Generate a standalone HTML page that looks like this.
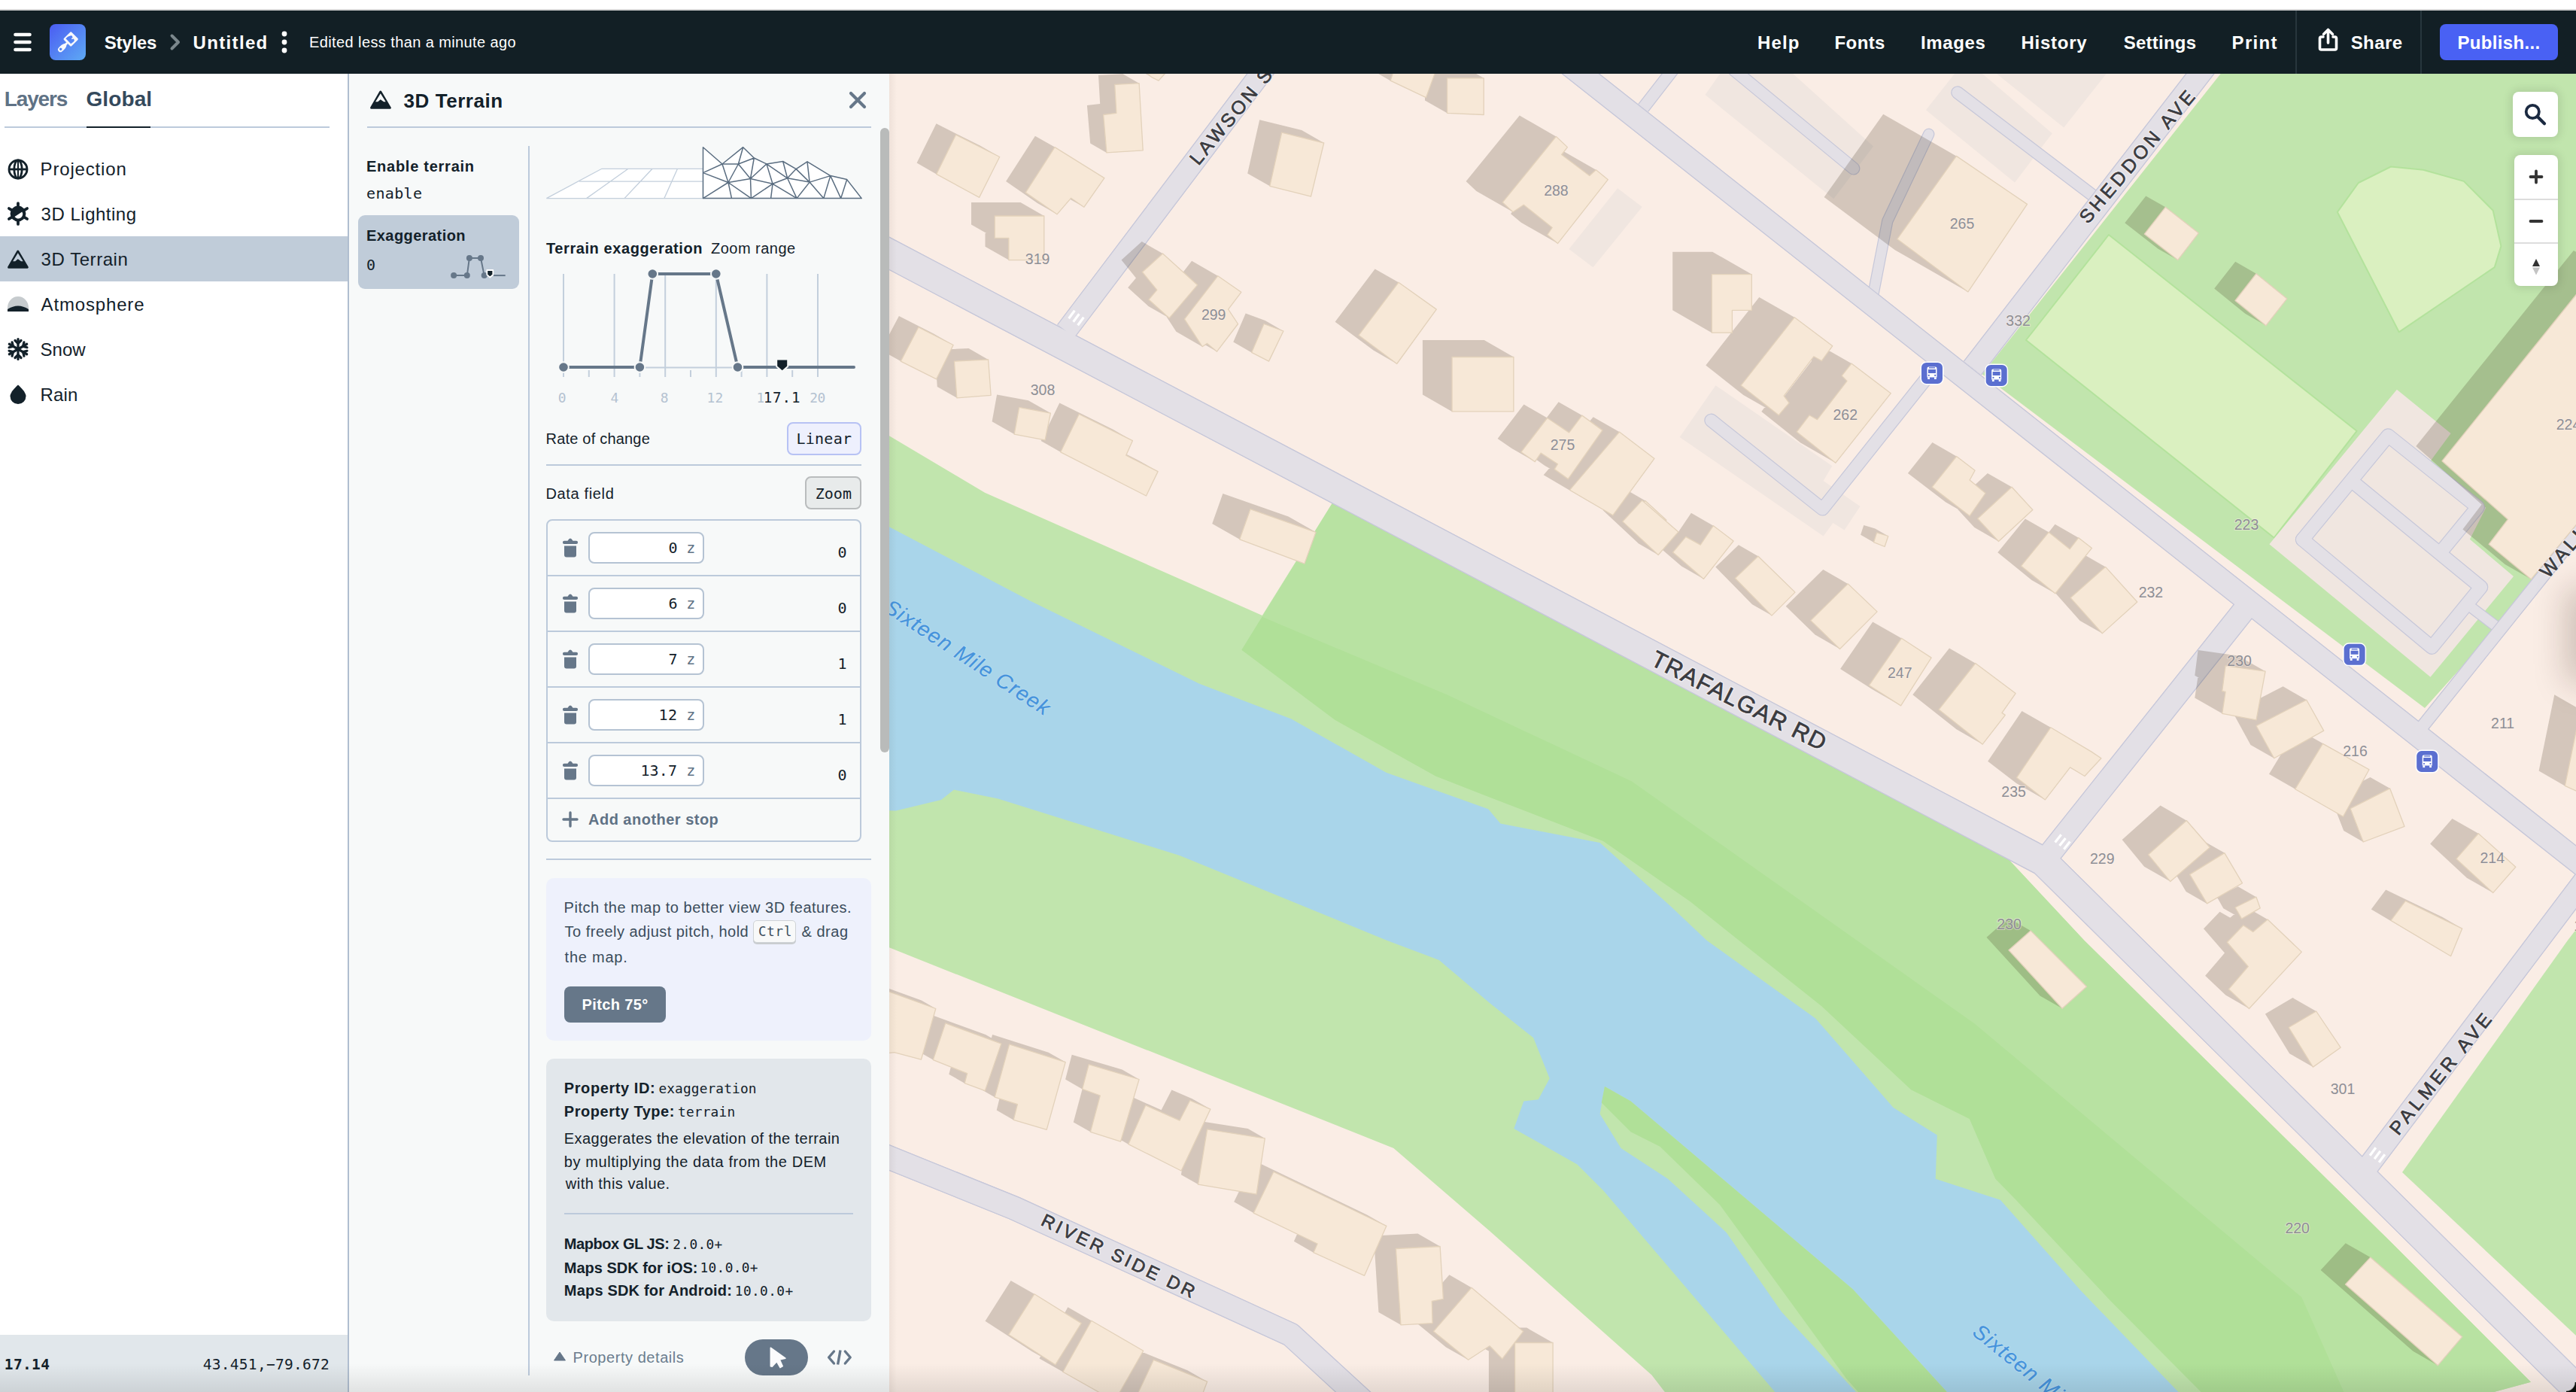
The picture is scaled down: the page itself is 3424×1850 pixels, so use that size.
<!DOCTYPE html>
<html lang="en">
<head>
<meta charset="utf-8">
<title>Mapbox Studio</title>
<style>
html,body{margin:0;padding:0}
body{width:3424px;height:1850px;overflow:hidden;background:#fff;position:relative;font-family:"Liberation Sans",sans-serif;color:#13212a}
.abs,.t,.tb,.m,svg{position:absolute}
.t,.tb,.m{white-space:pre;line-height:1}
.tb{font-weight:bold}
.m{font-family:"DejaVu Sans Mono","Liberation Mono",monospace}
#strip{left:0;top:0;width:3424px;height:12px;background:#fff;border-bottom:2px solid #d6d6d6}
#topbar{left:0;top:14px;width:3424px;height:84px;background:#121f25}
#left{left:0;top:98px;width:462px;height:1752px;background:#fff}
#lborder{left:462px;top:98px;width:2px;height:1752px;background:#b0bed0}
#mid{left:464px;top:98px;width:718px;height:1752px;background:#f7f9f9}
#map{left:1182px;top:98px;width:2242px;height:1752px;background:#faede5;overflow:hidden}
.ln{background:#bccadb}
.inp{left:782px;width:150px;height:38px;border:2px solid #b5c3d3;border-radius:8px;background:#fff}
.ctl{background:#fff;border-radius:8px;box-shadow:0 0 12px 3px rgba(0,0,0,.10)}
</style>
</head>
<body>
<div id="strip" class="abs"></div>
<div id="topbar" class="abs"></div>
<div id="left" class="abs"></div>
<div id="lborder" class="abs"></div>
<div id="mid" class="abs"></div>
<div id="map" class="abs">
<svg style="left:0;top:0" width="2242" height="1752" viewBox="1182 98 2242 1752"><polygon points="1170.0,572.0 1309.0,654.7 1677.8,818.0 1771.3,668.0 1790.0,657.0 2716.0,1145.0 2665.0,1137.0 2770.5,1250.0 3177.2,1650.0 3364.0,1836.8 3315.0,1850.0 2212.8,1850.0 2195.5,1827.6 1980.0,1636.0 1852.4,1525.9 1170.0,1254.6" fill="#c1e5ad"/>
<polygon points="3193.0,1558.0 3412.8,1250.0 3440.0,1215.0 3440.0,1790.0" fill="#c1e5ad"/>
<polygon points="2958.0,90.0 3440.0,90.0 3440.0,700.0 3223.0,941.0 2837.4,650.0 2634.8,497.3" fill="#c1e5ad"/>
<polygon points="1771.3,668.0 1650.4,863.8 1774.8,956.9 1908.4,1031.5 1980.0,1059.5 2130.9,1117.7 2246.5,1198.0 2421.1,1337.0 2540.3,1448.3 2617.9,1487.0 2652.4,1566.8 2680.0,1595.0 2805.0,1728.4 2925.7,1850.0 3315.0,1850.0 3364.0,1836.8 3177.2,1650.0 2770.5,1250.0 2665.0,1137.0 2716.0,1145.0 1790.0,657.0" fill="#b8e2a2"/>
<polygon points="1677.6,819.8 1923.3,923.3 2169.0,1038.4 2624.0,1360.0 3059.3,1724.1 3115.4,1850.0 2925.7,1850.0 2805.0,1728.4 2680.0,1595.0 2652.4,1566.8 2617.9,1487.0 2540.3,1448.3 2421.1,1337.0 2246.5,1198.0 2130.9,1117.7 1980.0,1059.5 1908.4,1031.5 1774.8,956.9 1650.4,863.8" fill="#b0e098"/>
<polygon points="2802.9,312.0 3132.6,572.8 3022.7,714.7 2693.0,452.0" fill="#daf0c0" stroke="#b3e29c" stroke-width="2" stroke-linejoin="round"/>
<polygon points="3106.8,281.8 3134.8,243.0 3177.9,221.5 3221.0,225.8 3274.9,240.9 3313.7,279.7 3324.4,327.1 3315.8,355.1 3188.7,441.3" fill="#daf0c0" stroke="#b3e29c" stroke-width="2" stroke-linejoin="round"/>
<polygon points="1170.0,694.0 1369.7,798.7 1593.8,908.6 1716.4,955.6 1842.5,1026.7 1978.2,1075.2 1994.4,1094.6 2126.6,1120.0 2220.7,1204.5 2268.8,1250.0 2413.2,1353.4 2516.6,1472.0 2574.8,1508.6 2572.7,1566.8 2658.9,1594.8 2766.0,1715.5 2895.5,1850.0 2359.3,1850.0 2130.9,1581.9 2096.4,1547.4 2012.3,1500.0 2025.3,1463.4 2044.7,1461.2 2059.7,1433.2 2038.2,1379.3 1980.0,1333.0 1912.8,1275.9 1843.8,1250.0 1568.0,1137.0 1326.6,1061.6 1268.0,1049.6 1251.0,1063.0 1190.8,1077.6 1170.0,1076.7" fill="#a9d5ea"/>
<polygon points="2133.0,1444.0 2126.6,1480.6 2154.6,1525.9 2217.0,1566.8 2294.7,1637.9 2368.0,1743.5 2467.0,1850.0 2587.8,1850.0 2462.8,1713.4 2167.5,1463.4" fill="#c1e5ad"/>
<polygon points="2133.0,1444.0 2128.7,1465.5 2167.5,1504.3 2206.3,1523.7 2286.0,1601.3 2454.0,1832.0 2470.0,1850.0 2587.8,1850.0 2462.8,1713.4 2167.5,1463.4" fill="#b0e098"/>
<polyline points="1100.0,293.6 2716.0,1145.0 3500.0,1919.9" fill="none" stroke="#c6c7d9" stroke-width="39.4" stroke-linecap="butt" stroke-linejoin="round"/>
<polyline points="2050.0,57.8 3500.0,1203.3" fill="none" stroke="#c6c7d9" stroke-width="31.4" stroke-linecap="butt" stroke-linejoin="round"/>
<polyline points="1417.0,440.0 1700.0,65.6" fill="none" stroke="#c6c7d9" stroke-width="29.4" stroke-linecap="butt" stroke-linejoin="round"/>
<polyline points="2622.0,489.0 2955.0,58.4" fill="none" stroke="#c6c7d9" stroke-width="30.4" stroke-linecap="butt" stroke-linejoin="round"/>
<polyline points="2990.7,800.8 2722.0,1138.0" fill="none" stroke="#c6c7d9" stroke-width="31.4" stroke-linecap="butt" stroke-linejoin="round"/>
<polyline points="3140.4,1559.6 3474.0,1118.2" fill="none" stroke="#c6c7d9" stroke-width="29.4" stroke-linecap="butt" stroke-linejoin="round"/>
<polyline points="3211.7,975.6 3474.0,648.5" fill="none" stroke="#c6c7d9" stroke-width="17.9" stroke-linecap="butt" stroke-linejoin="round"/>
<polyline points="1150.0,1525.6 1348.0,1605.6 1715.5,1773.7 1830.0,1879.0" fill="none" stroke="#c6c7d9" stroke-width="32.4" stroke-linecap="butt" stroke-linejoin="round"/>
<polyline points="1100.0,293.6 2716.0,1145.0 3500.0,1919.9" fill="none" stroke="#e3e0e6" stroke-width="37" stroke-linecap="butt" stroke-linejoin="round"/>
<polyline points="2050.0,57.8 3500.0,1203.3" fill="none" stroke="#e3e0e6" stroke-width="29" stroke-linecap="butt" stroke-linejoin="round"/>
<polyline points="1417.0,440.0 1700.0,65.6" fill="none" stroke="#e3e0e6" stroke-width="27" stroke-linecap="butt" stroke-linejoin="round"/>
<polyline points="2622.0,489.0 2955.0,58.4" fill="none" stroke="#e3e0e6" stroke-width="28" stroke-linecap="butt" stroke-linejoin="round"/>
<polyline points="2990.7,800.8 2722.0,1138.0" fill="none" stroke="#e3e0e6" stroke-width="29" stroke-linecap="butt" stroke-linejoin="round"/>
<polyline points="3140.4,1559.6 3474.0,1118.2" fill="none" stroke="#e3e0e6" stroke-width="27" stroke-linecap="butt" stroke-linejoin="round"/>
<polyline points="3211.7,975.6 3474.0,648.5" fill="none" stroke="#e3e0e6" stroke-width="15.5" stroke-linecap="butt" stroke-linejoin="round"/>
<polyline points="1150.0,1525.6 1348.0,1605.6 1715.5,1773.7 1830.0,1879.0" fill="none" stroke="#e3e0e6" stroke-width="30" stroke-linecap="butt" stroke-linejoin="round"/>
<polygon points="2288.3,95.0 2379.9,95.0 2490.1,194.4 2437.3,264.3 2266.5,126.1" fill="#f0e6e0"/>
<polygon points="2600.4,95.0 2631.4,95.0 2727.7,177.3 2678.0,242.5 2560.0,146.2" fill="#f0e6e0"/>
<polygon points="2650.1,95.0 2802.2,95.0 2743.2,169.5" fill="#f0e6e0"/>
<polygon points="2150.1,250.3 2182.7,275.1 2117.5,355.2 2085.5,331.0" fill="#f0e6e0"/>
<polygon points="2280.4,512.2 2435.3,619.3 2423.6,639.1 2472.5,672.9 2451.6,704.4 2436.4,695.0 2423.6,712.5 2232.6,580.9" fill="#f0e6e0"/>
<polygon points="3185.9,517.7 3257.6,575.9 3230.5,612.7 3304.2,674.8 3282.9,716.7 3341.0,766.0 3230.5,899.8 3016.4,723.3" fill="#f0e6e0"/>
<polyline points="2184.2,143.4 2224.6,91.3" fill="none" stroke="#c6c7d9" stroke-width="17.4" stroke-linecap="butt" stroke-linejoin="round"/>
<polyline points="2305.3,93.4 2463.7,223.9" fill="none" stroke="#c6c7d9" stroke-width="17.4" stroke-linecap="round" stroke-linejoin="round"/>
<polyline points="2601.9,123.0 2783.6,261.1" fill="none" stroke="#c6c7d9" stroke-width="17.4" stroke-linecap="round" stroke-linejoin="round"/>
<polyline points="2563.7,178.2 2508.8,293.8 2490.1,390.0" fill="none" stroke="#c6c7d9" stroke-width="15.4" stroke-linecap="round" stroke-linejoin="round"/>
<polyline points="2274.5,558.8 2422.4,676.4 2563.4,499.4" fill="none" stroke="#c6c7d9" stroke-width="18.4" stroke-linecap="round" stroke-linejoin="round"/>
<polyline points="3060.6,717.1 3174.3,579.0 3293.3,674.0 3248.0,729.1" fill="none" stroke="#c6c7d9" stroke-width="19.4" stroke-linecap="round" stroke-linejoin="round"/>
<polyline points="3130.4,643.0 3297.6,780.3 3232.4,860.2 3060.6,717.1" fill="none" stroke="#c6c7d9" stroke-width="19.4" stroke-linecap="round" stroke-linejoin="round"/>
<polyline points="3285.6,807.9 3319.7,833.8" fill="none" stroke="#c6c7d9" stroke-width="15.4" stroke-linecap="butt" stroke-linejoin="round"/>
<polyline points="2184.2,143.4 2224.6,91.3" fill="none" stroke="#e3e0e6" stroke-width="15" stroke-linecap="butt" stroke-linejoin="round"/>
<polyline points="2305.3,93.4 2463.7,223.9" fill="none" stroke="#e3e0e6" stroke-width="15" stroke-linecap="round" stroke-linejoin="round"/>
<polyline points="2601.9,123.0 2783.6,261.1" fill="none" stroke="#e3e0e6" stroke-width="15" stroke-linecap="round" stroke-linejoin="round"/>
<polyline points="2563.7,178.2 2508.8,293.8 2490.1,390.0" fill="none" stroke="#e3e0e6" stroke-width="13" stroke-linecap="round" stroke-linejoin="round"/>
<polyline points="2274.5,558.8 2422.4,676.4 2563.4,499.4" fill="none" stroke="#e3e0e6" stroke-width="16" stroke-linecap="round" stroke-linejoin="round"/>
<polyline points="3060.6,717.1 3174.3,579.0 3293.3,674.0 3248.0,729.1" fill="none" stroke="#e3e0e6" stroke-width="17" stroke-linecap="round" stroke-linejoin="round"/>
<polyline points="3130.4,643.0 3297.6,780.3 3232.4,860.2 3060.6,717.1" fill="none" stroke="#e3e0e6" stroke-width="17" stroke-linecap="round" stroke-linejoin="round"/>
<polyline points="3285.6,807.9 3319.7,833.8" fill="none" stroke="#e3e0e6" stroke-width="13" stroke-linecap="butt" stroke-linejoin="round"/>
<polyline points="1100.0,293.6 2716.0,1145.0 3500.0,1919.9" fill="none" stroke="#c6c7d9" stroke-width="39.4" stroke-linecap="butt" stroke-linejoin="round"/>
<polyline points="2050.0,57.8 3500.0,1203.3" fill="none" stroke="#c6c7d9" stroke-width="31.4" stroke-linecap="butt" stroke-linejoin="round"/>
<polyline points="1417.0,440.0 1700.0,65.6" fill="none" stroke="#c6c7d9" stroke-width="29.4" stroke-linecap="butt" stroke-linejoin="round"/>
<polyline points="2622.0,489.0 2955.0,58.4" fill="none" stroke="#c6c7d9" stroke-width="30.4" stroke-linecap="butt" stroke-linejoin="round"/>
<polyline points="2990.7,800.8 2722.0,1138.0" fill="none" stroke="#c6c7d9" stroke-width="31.4" stroke-linecap="butt" stroke-linejoin="round"/>
<polyline points="3140.4,1559.6 3474.0,1118.2" fill="none" stroke="#c6c7d9" stroke-width="29.4" stroke-linecap="butt" stroke-linejoin="round"/>
<polyline points="3211.7,975.6 3474.0,648.5" fill="none" stroke="#c6c7d9" stroke-width="17.9" stroke-linecap="butt" stroke-linejoin="round"/>
<polyline points="1150.0,1525.6 1348.0,1605.6 1715.5,1773.7 1830.0,1879.0" fill="none" stroke="#c6c7d9" stroke-width="32.4" stroke-linecap="butt" stroke-linejoin="round"/>
<polyline points="1100.0,293.6 2716.0,1145.0 3500.0,1919.9" fill="none" stroke="#e3e0e6" stroke-width="37" stroke-linecap="butt" stroke-linejoin="round"/>
<polyline points="2050.0,57.8 3500.0,1203.3" fill="none" stroke="#e3e0e6" stroke-width="29" stroke-linecap="butt" stroke-linejoin="round"/>
<polyline points="1417.0,440.0 1700.0,65.6" fill="none" stroke="#e3e0e6" stroke-width="27" stroke-linecap="butt" stroke-linejoin="round"/>
<polyline points="2622.0,489.0 2955.0,58.4" fill="none" stroke="#e3e0e6" stroke-width="28" stroke-linecap="butt" stroke-linejoin="round"/>
<polyline points="2990.7,800.8 2722.0,1138.0" fill="none" stroke="#e3e0e6" stroke-width="29" stroke-linecap="butt" stroke-linejoin="round"/>
<polyline points="3140.4,1559.6 3474.0,1118.2" fill="none" stroke="#e3e0e6" stroke-width="27" stroke-linecap="butt" stroke-linejoin="round"/>
<polyline points="3211.7,975.6 3474.0,648.5" fill="none" stroke="#e3e0e6" stroke-width="15.5" stroke-linecap="butt" stroke-linejoin="round"/>
<polyline points="1150.0,1525.6 1348.0,1605.6 1715.5,1773.7 1830.0,1879.0" fill="none" stroke="#e3e0e6" stroke-width="30" stroke-linecap="butt" stroke-linejoin="round"/>
<line x1="1420.6" y1="423.2" x2="1428.4" y2="412.8" stroke="#fff" stroke-width="3.2"/>
<line x1="1426.6" y1="427.7" x2="1434.4" y2="417.3" stroke="#fff" stroke-width="3.2"/>
<line x1="1432.6" y1="432.2" x2="1440.4" y2="421.8" stroke="#fff" stroke-width="3.2"/>
<line x1="2731.6" y1="1119.4" x2="2739.7" y2="1109.2" stroke="#fff" stroke-width="3.2"/>
<line x1="2737.5" y1="1124.1" x2="2745.5" y2="1113.9" stroke="#fff" stroke-width="3.2"/>
<line x1="2743.3" y1="1128.8" x2="2751.4" y2="1118.6" stroke="#fff" stroke-width="3.2"/>
<line x1="3150.1" y1="1535.7" x2="3157.9" y2="1525.3" stroke="#fff" stroke-width="3.2"/>
<line x1="3156.1" y1="1540.2" x2="3163.9" y2="1529.8" stroke="#fff" stroke-width="3.2"/>
<line x1="3162.1" y1="1544.7" x2="3169.9" y2="1534.3" stroke="#fff" stroke-width="3.2"/>
<path d="M1507.5 87.8 L1531.2 87.8 L1522.6 97.3 L1513.9 93.0 Z M1507.5 87.8 L1531.2 87.8 L1548.5 97.8 L1524.8 97.8 Z M1548.5 97.8 L1539.9 107.2 L1522.6 97.3 L1531.2 87.8 Z M1539.9 107.2 L1531.3 102.9 L1513.9 93.0 L1522.6 97.3 Z M1513.9 93.0 L1507.5 87.8 L1524.8 97.8 L1531.3 102.9 Z M1524.8 97.8 L1548.5 97.8 L1539.9 107.2 L1531.3 102.9 Z M1460.0 100.0 L1492.4 98.3 L1497.5 187.5 L1449.2 190.5 L1444.9 140.1 L1462.2 137.9 Z M1460.0 100.0 L1492.4 98.3 L1514.1 110.7 L1481.7 112.4 Z M1514.1 110.7 L1519.2 199.9 L1497.5 187.5 L1492.4 98.3 Z M1519.2 199.9 L1470.9 202.9 L1449.2 190.5 L1497.5 187.5 Z M1449.2 190.5 L1444.9 140.1 L1466.6 152.5 L1470.9 202.9 Z M1444.9 140.1 L1462.2 137.9 L1483.9 150.3 L1466.6 152.5 Z M1462.2 137.9 L1460.0 100.0 L1481.7 112.4 L1483.9 150.3 Z M1481.7 112.4 L1514.1 110.7 L1519.2 199.9 L1470.9 202.9 L1466.6 152.5 L1483.9 150.3 Z M1244.5 164.3 L1302.7 193.6 L1275.5 247.5 L1218.6 216.5 Z M1244.5 164.3 L1302.7 193.6 L1328.7 208.5 L1270.5 179.2 Z M1328.7 208.5 L1301.6 262.4 L1275.5 247.5 L1302.7 193.6 Z M1301.6 262.4 L1244.7 231.4 L1218.6 216.5 L1275.5 247.5 Z M1218.6 216.5 L1244.5 164.3 L1270.5 179.2 L1244.7 231.4 Z M1270.5 179.2 L1328.7 208.5 L1301.6 262.4 L1244.7 231.4 Z M1375.9 180.7 L1441.9 221.6 L1414.7 260.4 L1397.5 248.4 L1379.0 269.9 L1337.1 241.0 Z M1402.0 195.6 L1467.9 236.6 L1441.9 221.6 L1375.9 180.7 Z M1467.9 236.6 L1440.8 275.3 L1414.7 260.4 L1441.9 221.6 Z M1414.7 260.4 L1397.5 248.4 L1423.5 263.3 L1440.8 275.3 Z M1423.5 263.3 L1405.0 284.8 L1379.0 269.9 L1397.5 248.4 Z M1379.0 269.9 L1337.1 241.0 L1363.2 255.9 L1405.0 284.8 Z M1337.1 241.0 L1375.9 180.7 L1402.0 195.6 L1363.2 255.9 Z M1402.0 195.6 L1467.9 236.6 L1440.8 275.3 L1423.5 263.3 L1405.0 284.8 L1363.2 255.9 Z M1291.0 269.1 L1356.5 269.1 L1356.5 327.7 L1309.5 327.7 L1309.5 298.4 L1291.0 298.4 Z M1291.0 269.1 L1356.5 269.1 L1387.8 287.0 L1322.2 287.0 Z M1387.8 287.0 L1387.8 345.6 L1356.5 327.7 L1356.5 269.1 Z M1387.8 345.6 L1340.8 345.6 L1309.5 327.7 L1356.5 327.7 Z M1309.5 327.7 L1309.5 298.4 L1340.8 316.3 L1340.8 345.6 Z M1340.8 316.3 L1322.2 316.3 L1291.0 298.4 L1309.5 298.4 Z M1291.0 298.4 L1291.0 269.1 L1322.2 287.0 L1322.2 316.3 Z M1322.2 287.0 L1387.8 287.0 L1387.8 345.6 L1340.8 345.6 L1340.8 316.3 L1322.2 316.3 Z M1674.2 159.3 L1730.2 173.1 L1713.0 244.2 L1658.2 230.4 Z M1674.2 159.3 L1730.2 173.1 L1759.7 190.0 L1703.7 176.2 Z M1759.7 190.0 L1742.5 261.1 L1713.0 244.2 L1730.2 173.1 Z M1742.5 261.1 L1687.8 247.3 L1658.2 230.4 L1713.0 244.2 Z M1658.2 230.4 L1674.2 159.3 L1703.7 176.2 L1687.8 247.3 Z M1703.7 176.2 L1759.7 190.0 L1742.5 261.1 L1687.8 247.3 Z M1517.7 321.1 L1563.9 362.9 L1526.4 406.9 L1499.2 382.3 L1510.0 369.4 L1490.6 345.6 Z M1545.5 337.0 L1591.6 378.8 L1563.9 362.9 L1517.7 321.1 Z M1591.6 378.8 L1554.1 422.8 L1526.4 406.9 L1563.9 362.9 Z M1526.4 406.9 L1499.2 382.3 L1527.0 398.2 L1554.1 422.8 Z M1499.2 382.3 L1510.0 369.4 L1537.8 385.3 L1527.0 398.2 Z M1510.0 369.4 L1490.6 345.6 L1518.4 361.6 L1537.8 385.3 Z M1490.6 345.6 L1517.7 321.1 L1545.5 337.0 L1518.4 361.6 Z M1545.5 337.0 L1591.6 378.8 L1554.1 422.8 L1527.0 398.2 L1537.8 385.3 L1518.4 361.6 Z M1584.1 346.8 L1615.1 368.4 L1597.9 391.2 L1610.8 410.6 L1582.8 447.3 L1569.8 436.5 L1563.4 440.8 L1539.7 404.2 Z M1618.8 366.7 L1649.8 388.3 L1615.1 368.4 L1584.1 346.8 Z M1649.8 388.3 L1632.6 411.1 L1597.9 391.2 L1615.1 368.4 Z M1632.6 411.1 L1645.5 430.5 L1610.8 410.6 L1597.9 391.2 Z M1645.5 430.5 L1617.5 467.2 L1582.8 447.3 L1610.8 410.6 Z M1582.8 447.3 L1569.8 436.5 L1604.6 456.4 L1617.5 467.2 Z M1604.6 456.4 L1598.1 460.7 L1563.4 440.8 L1569.8 436.5 Z M1563.4 440.8 L1539.7 404.2 L1574.4 424.1 L1598.1 460.7 Z M1539.7 404.2 L1584.1 346.8 L1618.8 366.7 L1574.4 424.1 Z M1618.8 366.7 L1649.8 388.3 L1632.6 411.1 L1645.5 430.5 L1617.5 467.2 L1604.6 456.4 L1598.1 460.7 L1574.4 424.1 Z M1655.7 416.6 L1681.6 426.1 L1662.2 466.2 L1639.3 454.5 Z M1655.7 416.6 L1681.6 426.1 L1705.9 440.0 L1680.0 430.5 Z M1705.9 440.0 L1686.5 480.1 L1662.2 466.2 L1681.6 426.1 Z M1686.5 480.1 L1663.6 468.4 L1639.3 454.5 L1662.2 466.2 Z M1639.3 454.5 L1655.7 416.6 L1680.0 430.5 L1663.6 468.4 Z M1680.0 430.5 L1705.9 440.0 L1686.5 480.1 L1663.6 468.4 Z M1827.6 357.5 L1878.1 393.2 L1825.5 465.6 L1774.6 427.7 Z M1858.9 375.3 L1909.3 411.1 L1878.1 393.2 L1827.6 357.5 Z M1909.3 411.1 L1856.7 483.5 L1825.5 465.6 L1878.1 393.2 Z M1825.5 465.6 L1774.6 427.7 L1805.9 445.6 L1856.7 483.5 Z M1774.6 427.7 L1827.6 357.5 L1858.9 375.3 L1805.9 445.6 Z M1858.9 375.3 L1909.3 411.1 L1856.7 483.5 L1805.9 445.6 Z M1890.9 452.1 L1940.9 452.1 L1972.8 452.1 L1972.8 524.5 L1890.9 524.5 Z M1890.9 452.1 L1940.9 452.1 L1980.0 474.5 L1930.0 474.5 Z M1940.9 452.1 L1972.8 452.1 L2011.9 474.5 L1980.0 474.5 Z M2011.9 474.5 L2011.9 546.9 L1972.8 524.5 L1972.8 452.1 Z M2011.9 546.9 L1930.0 546.9 L1890.9 524.5 L1972.8 524.5 Z M1890.9 524.5 L1890.9 452.1 L1930.0 474.5 L1930.0 546.9 Z M1930.0 474.5 L1980.0 474.5 L2011.9 474.5 L2011.9 546.9 L1930.0 546.9 Z M1826.4 79.4 L1882.4 79.4 L1869.5 114.7 L1822.1 92.3 Z M1826.4 79.4 L1882.4 79.4 L1908.4 94.3 L1852.4 94.3 Z M1908.4 94.3 L1895.5 129.7 L1869.5 114.7 L1882.4 79.4 Z M1895.5 129.7 L1848.1 107.2 L1822.1 92.3 L1869.5 114.7 Z M1822.1 92.3 L1826.4 79.4 L1852.4 94.3 L1848.1 107.2 Z M1852.4 94.3 L1908.4 94.3 L1895.5 129.7 L1848.1 107.2 Z M1894.0 86.9 L1942.7 86.9 L1942.7 135.6 L1894.0 133.4 Z M1894.0 86.9 L1942.7 86.9 L1972.2 103.8 L1923.5 103.8 Z M1972.2 103.8 L1972.2 152.5 L1942.7 135.6 L1942.7 86.9 Z M1972.2 152.5 L1923.5 150.3 L1894.0 133.4 L1942.7 135.6 Z M1894.0 133.4 L1894.0 86.9 L1923.5 103.8 L1923.5 150.3 Z M1923.5 103.8 L1972.2 103.8 L1972.2 152.5 L1923.5 150.3 Z M1194.9 419.9 L1241.0 443.6 L1218.6 488.9 L1171.2 465.2 Z M1194.9 419.9 L1241.0 443.6 L1267.1 458.5 L1220.9 434.8 Z M1267.1 458.5 L1244.7 503.8 L1218.6 488.9 L1241.0 443.6 Z M1244.7 503.8 L1197.2 480.1 L1171.2 465.2 L1218.6 488.9 Z M1171.2 465.2 L1194.9 419.9 L1220.9 434.8 L1197.2 480.1 Z M1220.9 434.8 L1267.1 458.5 L1244.7 503.8 L1197.2 480.1 Z M1242.3 465.2 L1287.6 463.0 L1291.0 510.4 L1245.8 513.9 Z M1242.3 465.2 L1287.6 463.0 L1313.6 477.9 L1268.4 480.1 Z M1313.6 477.9 L1317.1 525.3 L1291.0 510.4 L1287.6 463.0 Z M1317.1 525.3 L1271.8 528.8 L1245.8 513.9 L1291.0 510.4 Z M1245.8 513.9 L1242.3 465.2 L1268.4 480.1 L1271.8 528.8 Z M1268.4 480.1 L1313.6 477.9 L1317.1 525.3 L1271.8 528.8 Z M1325.1 524.4 L1366.9 532.2 L1359.5 567.9 L1318.6 560.2 Z M1325.1 524.4 L1366.9 532.2 L1396.4 549.1 L1354.6 541.3 Z M1396.4 549.1 L1389.1 584.8 L1359.5 567.9 L1366.9 532.2 Z M1389.1 584.8 L1348.1 577.1 L1318.6 560.2 L1359.5 567.9 Z M1318.6 560.2 L1325.1 524.4 L1354.6 541.3 L1348.1 577.1 Z M1354.6 541.3 L1396.4 549.1 L1389.1 584.8 L1348.1 577.1 Z M1408.3 535.4 L1479.4 570.8 L1470.8 590.2 L1513.0 611.7 L1497.5 644.1 L1383.7 585.9 Z M1408.3 535.4 L1479.4 570.8 L1505.4 585.7 L1434.3 550.3 Z M1505.4 585.7 L1496.8 605.1 L1470.8 590.2 L1479.4 570.8 Z M1470.8 590.2 L1513.0 611.7 L1539.1 626.6 L1496.8 605.1 Z M1539.1 626.6 L1523.5 659.0 L1497.5 644.1 L1513.0 611.7 Z M1523.5 659.0 L1409.7 600.8 L1383.7 585.9 L1497.5 644.1 Z M1383.7 585.9 L1408.3 535.4 L1434.3 550.3 L1409.7 600.8 Z M1434.3 550.3 L1505.4 585.7 L1496.8 605.1 L1539.1 626.6 L1523.5 659.0 L1409.7 600.8 Z M1625.4 655.9 L1712.5 686.5 L1697.4 728.3 L1611.2 695.9 Z M1625.4 655.9 L1712.5 686.5 L1749.0 707.3 L1661.9 676.7 Z M1749.0 707.3 L1733.9 749.1 L1697.4 728.3 L1712.5 686.5 Z M1733.9 749.1 L1647.7 716.8 L1611.2 695.9 L1697.4 728.3 Z M1611.2 695.9 L1625.4 655.9 L1661.9 676.7 L1647.7 716.8 Z M1661.9 676.7 L1749.0 707.3 L1733.9 749.1 L1647.7 716.8 Z M2019.8 153.5 L2034.8 167.8 L2027.1 177.7 L2064.2 205.7 L2072.8 197.9 L2088.7 210.9 L2021.9 295.8 L2008.1 284.2 L2014.6 274.7 L1976.7 244.5 L1962.4 254.0 L1948.6 241.0 Z M2068.4 181.4 L2083.4 195.6 L2034.8 167.8 L2019.8 153.5 Z M2083.4 195.6 L2075.7 205.5 L2027.1 177.7 L2034.8 167.8 Z M2075.7 205.5 L2112.8 233.5 L2064.2 205.7 L2027.1 177.7 Z M2064.2 205.7 L2072.8 197.9 L2121.4 225.8 L2112.8 233.5 Z M2121.4 225.8 L2137.3 238.7 L2088.7 210.9 L2072.8 197.9 Z M2137.3 238.7 L2070.5 323.6 L2021.9 295.8 L2088.7 210.9 Z M2021.9 295.8 L2008.1 284.2 L2056.7 312.0 L2070.5 323.6 Z M2008.1 284.2 L2014.6 274.7 L2063.2 302.5 L2056.7 312.0 Z M2014.6 274.7 L1976.7 244.5 L2025.3 272.3 L2063.2 302.5 Z M2025.3 272.3 L2011.0 281.8 L1962.4 254.0 L1976.7 244.5 Z M1962.4 254.0 L1948.6 241.0 L1997.2 268.9 L2011.0 281.8 Z M1948.6 241.0 L2019.8 153.5 L2068.4 181.4 L1997.2 268.9 Z M2068.4 181.4 L2083.4 195.6 L2075.7 205.5 L2112.8 233.5 L2121.4 225.8 L2137.3 238.7 L2070.5 323.6 L2056.7 312.0 L2063.2 302.5 L2025.3 272.3 L2011.0 281.8 L1997.2 268.9 Z M2223.2 334.7 L2276.2 334.7 L2276.2 382.6 L2250.3 382.6 L2250.3 412.3 L2223.2 412.3 Z M2223.2 334.7 L2276.2 334.7 L2328.3 364.6 L2275.3 364.6 Z M2328.3 364.6 L2328.3 412.4 L2276.2 382.6 L2276.2 334.7 Z M2328.3 412.4 L2302.4 412.4 L2250.3 382.6 L2276.2 382.6 Z M2302.4 412.4 L2302.4 442.2 L2250.3 412.3 L2250.3 382.6 Z M2302.4 442.2 L2275.3 442.2 L2223.2 412.3 L2250.3 412.3 Z M2223.2 412.3 L2223.2 334.7 L2275.3 364.6 L2275.3 442.2 Z M2275.3 364.6 L2328.3 364.6 L2328.3 412.4 L2302.4 412.4 L2302.4 442.2 L2275.3 442.2 Z M2338.3 395.0 L2388.8 433.0 L2374.4 452.8 L2363.9 446.9 L2324.3 499.3 L2331.3 508.7 L2317.3 525.0 L2267.3 485.4 Z M2385.2 421.8 L2435.7 459.8 L2388.8 433.0 L2338.3 395.0 Z M2435.7 459.8 L2421.3 479.6 L2374.4 452.8 L2388.8 433.0 Z M2421.3 479.6 L2410.8 473.8 L2363.9 446.9 L2374.4 452.8 Z M2410.8 473.8 L2371.2 526.2 L2324.3 499.3 L2363.9 446.9 Z M2371.2 526.2 L2378.2 535.5 L2331.3 508.7 L2324.3 499.3 Z M2378.2 535.5 L2364.2 551.8 L2317.3 525.0 L2331.3 508.7 Z M2317.3 525.0 L2267.3 485.4 L2314.1 512.2 L2364.2 551.8 Z M2267.3 485.4 L2338.3 395.0 L2385.2 421.8 L2314.1 512.2 Z M2385.2 421.8 L2435.7 459.8 L2421.3 479.6 L2410.8 473.8 L2371.2 526.2 L2378.2 535.5 L2364.2 551.8 L2314.1 512.2 Z M2414.0 456.3 L2466.4 495.8 L2393.0 588.3 L2341.3 547.1 L2358.1 525.0 L2368.6 530.8 L2408.2 479.5 L2401.2 472.6 Z M2460.9 483.1 L2513.3 522.7 L2466.4 495.8 L2414.0 456.3 Z M2513.3 522.7 L2439.9 615.2 L2393.0 588.3 L2466.4 495.8 Z M2393.0 588.3 L2341.3 547.1 L2388.2 573.9 L2439.9 615.2 Z M2341.3 547.1 L2358.1 525.0 L2405.0 551.8 L2388.2 573.9 Z M2358.1 525.0 L2368.6 530.8 L2415.5 557.6 L2405.0 551.8 Z M2368.6 530.8 L2408.2 479.5 L2455.0 506.4 L2415.5 557.6 Z M2408.2 479.5 L2401.2 472.6 L2448.1 499.4 L2455.0 506.4 Z M2401.2 472.6 L2414.0 456.3 L2460.9 483.1 L2448.1 499.4 Z M2460.9 483.1 L2513.3 522.7 L2439.9 615.2 L2388.2 573.9 L2405.0 551.8 L2415.5 557.6 L2455.0 506.4 L2448.1 499.4 Z M2503.2 151.8 L2597.3 215.7 L2518.7 332.2 L2424.6 262.0 Z M2600.4 207.4 L2694.5 271.4 L2597.3 215.7 L2503.2 151.8 Z M2694.5 271.4 L2615.9 387.9 L2518.7 332.2 L2597.3 215.7 Z M2518.7 332.2 L2424.6 262.0 L2521.8 317.7 L2615.9 387.9 Z M2424.6 262.0 L2503.2 151.8 L2600.4 207.4 L2521.8 317.7 Z M2600.4 207.4 L2694.5 271.4 L2615.9 387.9 L2521.8 317.7 Z M2025.5 537.6 L2054.4 557.0 L2071.6 534.2 L2098.8 554.0 L2053.1 618.7 L2035.0 605.7 L2039.3 598.8 L2016.9 584.2 L2009.1 595.8 L1990.6 582.9 Z M2056.7 555.5 L2085.6 574.9 L2054.4 557.0 L2025.5 537.6 Z M2054.4 557.0 L2071.6 534.2 L2102.8 552.1 L2085.6 574.9 Z M2102.8 552.1 L2130.0 571.9 L2098.8 554.0 L2071.6 534.2 Z M2130.0 571.9 L2084.3 636.6 L2053.1 618.7 L2098.8 554.0 Z M2053.1 618.7 L2035.0 605.7 L2066.2 623.6 L2084.3 636.6 Z M2035.0 605.7 L2039.3 598.8 L2070.5 616.7 L2066.2 623.6 Z M2039.3 598.8 L2016.9 584.2 L2048.1 602.1 L2070.5 616.7 Z M2048.1 602.1 L2040.3 613.7 L2009.1 595.8 L2016.9 584.2 Z M2009.1 595.8 L1990.6 582.9 L2021.8 600.8 L2040.3 613.7 Z M1990.6 582.9 L2025.5 537.6 L2056.7 555.5 L2021.8 600.8 Z M2056.7 555.5 L2085.6 574.9 L2102.8 552.1 L2130.0 571.9 L2084.3 636.6 L2066.2 623.6 L2070.5 616.7 L2048.1 602.1 L2040.3 613.7 L2021.8 600.8 Z M2117.7 554.2 L2164.2 589.5 L2109.1 664.9 L2051.7 631.3 Z M2152.4 574.1 L2199.0 609.4 L2164.2 589.5 L2117.7 554.2 Z M2199.0 609.4 L2143.8 684.8 L2109.1 664.9 L2164.2 589.5 Z M2109.1 664.9 L2051.7 631.3 L2086.5 651.2 L2143.8 684.8 Z M2051.7 631.3 L2117.7 554.2 L2152.4 574.1 L2086.5 651.2 Z M2152.4 574.1 L2199.0 609.4 L2143.8 684.8 L2086.5 651.2 Z M2160.9 650.5 L2188.9 676.4 L2169.5 700.1 L2139.3 676.4 Z M2186.9 665.4 L2214.9 691.3 L2188.9 676.4 L2160.9 650.5 Z M2214.9 691.3 L2195.5 715.0 L2169.5 700.1 L2188.9 676.4 Z M2169.5 700.1 L2139.3 676.4 L2165.3 691.3 L2195.5 715.0 Z M2139.3 676.4 L2160.9 650.5 L2186.9 665.4 L2165.3 691.3 Z M2186.9 665.4 L2214.9 691.3 L2195.5 715.0 L2165.3 691.3 Z M2568.5 588.1 L2593.0 606.8 L2586.0 619.6 L2606.9 637.1 L2586.0 667.3 L2535.9 628.9 Z M2600.6 606.5 L2625.1 625.2 L2593.0 606.8 L2568.5 588.1 Z M2625.1 625.2 L2618.1 638.0 L2586.0 619.6 L2593.0 606.8 Z M2618.1 638.0 L2639.1 655.5 L2606.9 637.1 L2586.0 619.6 Z M2639.1 655.5 L2618.1 685.7 L2586.0 667.3 L2606.9 637.1 Z M2586.0 667.3 L2535.9 628.9 L2568.0 647.3 L2618.1 685.7 Z M2535.9 628.9 L2568.5 588.1 L2600.6 606.5 L2568.0 647.3 Z M2600.6 606.5 L2625.1 625.2 L2618.1 638.0 L2639.1 655.5 L2618.1 685.7 L2568.0 647.3 Z M2641.9 628.9 L2669.8 659.2 L2624.4 701.1 L2596.5 670.8 Z M2674.0 647.3 L2701.9 677.6 L2669.8 659.2 L2641.9 628.9 Z M2701.9 677.6 L2656.5 719.5 L2624.4 701.1 L2669.8 659.2 Z M2624.4 701.1 L2596.5 670.8 L2628.6 689.2 L2656.5 719.5 Z M2596.5 670.8 L2641.9 628.9 L2674.0 647.3 L2628.6 689.2 Z M2674.0 647.3 L2701.9 677.6 L2656.5 719.5 L2628.6 689.2 Z M2477.3 697.9 L2492.4 702.6 L2487.8 716.6 L2473.1 710.7 Z M2477.3 697.9 L2492.4 702.6 L2509.8 712.5 L2494.6 707.9 Z M2509.8 712.5 L2505.1 726.5 L2487.8 716.6 L2492.4 702.6 Z M2505.1 726.5 L2490.5 720.7 L2473.1 710.7 L2487.8 716.6 Z M2473.1 710.7 L2477.3 697.9 L2494.6 707.9 L2490.5 720.7 Z M2494.6 707.9 L2509.8 712.5 L2505.1 726.5 L2490.5 720.7 Z M2852.3 260.4 L2896.2 294.9 L2868.6 330.7 L2824.3 296.2 Z M2878.3 275.3 L2922.3 309.8 L2896.2 294.9 L2852.3 260.4 Z M2922.3 309.8 L2894.7 345.6 L2868.6 330.7 L2896.2 294.9 Z M2868.6 330.7 L2824.3 296.2 L2850.3 311.1 L2894.7 345.6 Z M2824.3 296.2 L2852.3 260.4 L2878.3 275.3 L2850.3 311.1 Z M2878.3 275.3 L2922.3 309.8 L2894.7 345.6 L2850.3 311.1 Z M2971.2 347.8 L3012.2 381.0 L2984.2 416.8 L2943.2 383.6 Z M2999.0 363.7 L3039.9 396.9 L3012.2 381.0 L2971.2 347.8 Z M3039.9 396.9 L3011.9 432.7 L2984.2 416.8 L3012.2 381.0 Z M2984.2 416.8 L2943.2 383.6 L2971.0 399.5 L3011.9 432.7 Z M2943.2 383.6 L2971.2 347.8 L2999.0 363.7 L2971.0 399.5 Z M2999.0 363.7 L3039.9 396.9 L3011.9 432.7 L2971.0 399.5 Z M3459.5 592.9 L3329.6 750.0 L3273.4 703.4 L3298.6 670.4 L3211.3 592.9 L3420.8 333.0 Z M3455.5 352.8 L3246.0 612.7 L3211.3 592.9 L3420.8 333.0 Z M3246.0 612.7 L3333.3 690.3 L3298.6 670.4 L3211.3 592.9 Z M3333.3 690.3 L3308.1 723.3 L3273.4 703.4 L3298.6 670.4 Z M3308.1 723.3 L3364.3 769.8 L3329.6 750.0 L3273.4 703.4 Z M3329.6 750.0 L3459.5 592.9 L3494.3 612.7 L3364.3 769.8 Z M3459.5 592.9 L3420.8 333.0 L3455.5 352.8 L3494.3 612.7 Z M3494.3 612.7 L3364.3 769.8 L3308.1 723.3 L3333.3 690.3 L3246.0 612.7 L3455.5 352.8 Z M2156.5 650.2 L2204.8 692.0 L2178.1 722.6 L2130.7 678.2 Z M2182.6 665.1 L2230.9 706.9 L2204.8 692.0 L2156.5 650.2 Z M2230.9 706.9 L2204.1 737.5 L2178.1 722.6 L2204.8 692.0 Z M2178.1 722.6 L2130.7 678.2 L2156.7 693.1 L2204.1 737.5 Z M2130.7 678.2 L2156.5 650.2 L2182.6 665.1 L2156.7 693.1 Z M2182.6 665.1 L2230.9 706.9 L2204.1 737.5 L2156.7 693.1 Z M2247.9 681.8 L2274.6 702.1 L2235.0 752.5 L2194.0 717.2 L2211.3 696.5 L2230.7 707.2 Z M2277.4 698.7 L2304.1 719.0 L2274.6 702.1 L2247.9 681.8 Z M2304.1 719.0 L2264.5 769.4 L2235.0 752.5 L2274.6 702.1 Z M2235.0 752.5 L2194.0 717.2 L2223.5 734.1 L2264.5 769.4 Z M2194.0 717.2 L2211.3 696.5 L2240.8 713.4 L2223.5 734.1 Z M2211.3 696.5 L2230.7 707.2 L2260.2 724.1 L2240.8 713.4 Z M2230.7 707.2 L2247.9 681.8 L2277.4 698.7 L2260.2 724.1 Z M2277.4 698.7 L2304.1 719.0 L2264.5 769.4 L2223.5 734.1 L2240.8 713.4 L2260.2 724.1 Z M2310.9 724.3 L2360.0 772.2 L2329.0 803.2 L2280.3 753.6 Z M2336.9 739.2 L2386.0 787.1 L2360.0 772.2 L2310.9 724.3 Z M2386.0 787.1 L2355.0 818.1 L2329.0 803.2 L2360.0 772.2 Z M2329.0 803.2 L2280.3 753.6 L2306.3 768.5 L2355.0 818.1 Z M2280.3 753.6 L2310.9 724.3 L2336.9 739.2 L2306.3 768.5 Z M2336.9 739.2 L2386.0 787.1 L2355.0 818.1 L2306.3 768.5 Z M2423.3 757.0 L2462.1 794.0 L2412.5 843.6 L2373.7 805.7 Z M2456.3 775.9 L2495.1 812.9 L2462.1 794.0 L2423.3 757.0 Z M2495.1 812.9 L2445.5 862.5 L2412.5 843.6 L2462.1 794.0 Z M2412.5 843.6 L2373.7 805.7 L2406.7 824.6 L2445.5 862.5 Z M2373.7 805.7 L2423.3 757.0 L2456.3 775.9 L2406.7 824.6 Z M2456.3 775.9 L2495.1 812.9 L2445.5 862.5 L2406.7 824.6 Z M2489.2 826.4 L2528.9 852.3 L2488.4 916.1 L2446.1 888.9 Z M2527.4 848.3 L2567.1 874.1 L2528.9 852.3 L2489.2 826.4 Z M2567.1 874.1 L2526.6 937.9 L2488.4 916.1 L2528.9 852.3 Z M2488.4 916.1 L2446.1 888.9 L2484.3 910.8 L2526.6 937.9 Z M2446.1 888.9 L2489.2 826.4 L2527.4 848.3 L2484.3 910.8 Z M2527.4 848.3 L2567.1 874.1 L2526.6 937.9 L2484.3 910.8 Z M2591.0 861.6 L2644.4 901.7 L2626.3 927.5 L2630.6 930.6 L2600.5 969.3 L2542.3 923.2 Z M2625.7 881.5 L2679.1 921.6 L2644.4 901.7 L2591.0 861.6 Z M2679.1 921.6 L2661.0 947.4 L2626.3 927.5 L2644.4 901.7 Z M2661.0 947.4 L2665.3 950.4 L2630.6 930.6 L2626.3 927.5 Z M2665.3 950.4 L2635.2 989.2 L2600.5 969.3 L2630.6 930.6 Z M2600.5 969.3 L2542.3 923.2 L2577.0 943.1 L2635.2 989.2 Z M2542.3 923.2 L2591.0 861.6 L2625.7 881.5 L2577.0 943.1 Z M2625.7 881.5 L2679.1 921.6 L2661.0 947.4 L2665.3 950.4 L2635.2 989.2 L2577.0 943.1 Z M2687.5 944.9 L2741.8 977.3 L2754.7 985.9 L2732.8 1009.6 L2713.4 998.0 L2680.2 1041.1 L2642.2 1011.8 Z M2725.7 966.8 L2780.0 999.1 L2741.8 977.3 L2687.5 944.9 Z M2780.0 999.1 L2792.9 1007.8 L2754.7 985.9 L2741.8 977.3 Z M2792.9 1007.8 L2770.9 1031.5 L2732.8 1009.6 L2754.7 985.9 Z M2732.8 1009.6 L2713.4 998.0 L2751.6 1019.8 L2770.9 1031.5 Z M2751.6 1019.8 L2718.4 1062.9 L2680.2 1041.1 L2713.4 998.0 Z M2680.2 1041.1 L2642.2 1011.8 L2680.4 1033.6 L2718.4 1062.9 Z M2642.2 1011.8 L2687.5 944.9 L2725.7 966.8 L2680.4 1033.6 Z M2725.7 966.8 L2780.0 999.1 L2792.9 1007.8 L2770.9 1031.5 L2751.6 1019.8 L2718.4 1062.9 L2680.4 1033.6 Z M2691.9 689.4 L2719.9 711.8 L2731.5 696.8 L2749.2 710.6 L2700.5 770.9 L2655.3 734.3 Z M2723.1 707.3 L2751.2 729.7 L2719.9 711.8 L2691.9 689.4 Z M2719.9 711.8 L2731.5 696.8 L2762.8 714.7 L2751.2 729.7 Z M2762.8 714.7 L2780.5 728.4 L2749.2 710.6 L2731.5 696.8 Z M2780.5 728.4 L2731.8 788.8 L2700.5 770.9 L2749.2 710.6 Z M2700.5 770.9 L2655.3 734.3 L2686.5 752.2 L2731.8 788.8 Z M2655.3 734.3 L2691.9 689.4 L2723.1 707.3 L2686.5 752.2 Z M2723.1 707.3 L2751.2 729.7 L2762.8 714.7 L2780.5 728.4 L2731.8 788.8 L2686.5 752.2 Z M2769.1 736.6 L2811.3 783.1 L2764.7 824.9 L2722.5 777.5 Z M2798.6 753.4 L2840.8 800.0 L2811.3 783.1 L2769.1 736.6 Z M2840.8 800.0 L2794.3 841.8 L2764.7 824.9 L2811.3 783.1 Z M2764.7 824.9 L2722.5 777.5 L2752.0 794.4 L2794.3 841.8 Z M2722.5 777.5 L2769.1 736.6 L2798.6 753.4 L2752.0 794.4 Z M2798.6 753.4 L2840.8 800.0 L2794.3 841.8 L2752.0 794.4 Z M2921.6 864.0 L2974.6 871.4 L2962.5 936.0 L2917.3 927.4 L2921.6 898.5 L2917.3 897.7 Z M2921.6 864.0 L2974.6 871.4 L3011.1 892.2 L2958.1 884.9 Z M3011.1 892.2 L2999.0 956.9 L2962.5 936.0 L2974.6 871.4 Z M2999.0 956.9 L2953.7 948.3 L2917.3 927.4 L2962.5 936.0 Z M2917.3 927.4 L2921.6 898.5 L2958.1 919.4 L2953.7 948.3 Z M2958.1 919.4 L2953.7 918.5 L2917.3 897.7 L2921.6 898.5 Z M2917.3 897.7 L2921.6 864.0 L2958.1 884.9 L2953.7 918.5 Z M2958.1 884.9 L3011.1 892.2 L2999.0 956.9 L2953.7 948.3 L2958.1 919.4 L2953.7 918.5 Z M3034.6 912.3 L3057.4 953.2 L2991.5 989.9 L2967.8 946.8 Z M3065.8 930.2 L3088.7 971.1 L3057.4 953.2 L3034.6 912.3 Z M3088.7 971.1 L3022.7 1007.8 L2991.5 989.9 L3057.4 953.2 Z M2991.5 989.9 L2967.8 946.8 L2999.0 964.7 L3022.7 1007.8 Z M2967.8 946.8 L3034.6 912.3 L3065.8 930.2 L2999.0 964.7 Z M3065.8 930.2 L3088.7 971.1 L3022.7 1007.8 L2999.0 964.7 Z M3052.6 968.5 L3114.3 1003.0 L3079.8 1065.5 L3016.0 1028.8 Z M3052.6 968.5 L3114.3 1003.0 L3149.0 1022.8 L3087.4 988.4 Z M3149.0 1022.8 L3114.5 1085.3 L3079.8 1065.5 L3114.3 1003.0 Z M3079.8 1065.5 L3016.0 1028.8 L3050.7 1048.7 L3114.5 1085.3 Z M3016.0 1028.8 L3052.6 968.5 L3087.4 988.4 L3050.7 1048.7 Z M3087.4 988.4 L3149.0 1022.8 L3114.5 1085.3 L3050.7 1048.7 Z M3150.5 1032.9 L3169.9 1083.4 L3115.2 1104.1 L3098.0 1059.7 Z M3176.6 1047.8 L3196.0 1098.3 L3169.9 1083.4 L3150.5 1032.9 Z M3196.0 1098.3 L3141.2 1119.0 L3115.2 1104.1 L3169.9 1083.4 Z M3115.2 1104.1 L3098.0 1059.7 L3124.0 1074.6 L3141.2 1119.0 Z M3098.0 1059.7 L3150.5 1032.9 L3176.6 1047.8 L3124.0 1074.6 Z M3176.6 1047.8 L3196.0 1098.3 L3141.2 1119.0 L3124.0 1074.6 Z M3259.5 1087.9 L3309.1 1132.3 L3278.9 1166.8 L3230.2 1121.5 Z M3294.3 1107.8 L3343.8 1152.2 L3309.1 1132.3 L3259.5 1087.9 Z M3343.8 1152.2 L3313.7 1186.6 L3278.9 1166.8 L3309.1 1132.3 Z M3278.9 1166.8 L3230.2 1121.5 L3264.9 1141.4 L3313.7 1186.6 Z M3230.2 1121.5 L3259.5 1087.9 L3294.3 1107.8 L3264.9 1141.4 Z M3294.3 1107.8 L3343.8 1152.2 L3313.7 1186.6 L3264.9 1141.4 Z M2871.6 1070.6 L2902.6 1106.4 L2850.1 1151.7 L2820.7 1115.9 Z M2906.3 1090.5 L2937.4 1126.3 L2902.6 1106.4 L2871.6 1070.6 Z M2937.4 1126.3 L2884.8 1171.6 L2850.1 1151.7 L2902.6 1106.4 Z M2850.1 1151.7 L2820.7 1115.9 L2855.5 1135.8 L2884.8 1171.6 Z M2820.7 1115.9 L2871.6 1070.6 L2906.3 1090.5 L2855.5 1135.8 Z M2906.3 1090.5 L2937.4 1126.3 L2884.8 1171.6 L2855.5 1135.8 Z M2929.0 1117.7 L2952.7 1157.8 L2905.7 1185.0 L2882.9 1146.2 Z M2956.8 1133.6 L2980.5 1173.7 L2952.7 1157.8 L2929.0 1117.7 Z M2980.5 1173.7 L2933.5 1200.9 L2905.7 1185.0 L2952.7 1157.8 Z M2905.7 1185.0 L2882.9 1146.2 L2910.6 1162.1 L2933.5 1200.9 Z M2882.9 1146.2 L2929.0 1117.7 L2956.8 1133.6 L2910.6 1162.1 Z M2956.8 1133.6 L2980.5 1173.7 L2933.5 1200.9 L2910.6 1162.1 Z M2974.7 1178.3 L2979.9 1193.0 L2955.3 1207.2 L2946.7 1192.1 Z M2999.0 1192.2 L3004.2 1206.9 L2979.9 1193.0 L2974.7 1178.3 Z M3004.2 1206.9 L2979.6 1221.1 L2955.3 1207.2 L2979.9 1193.0 Z M2955.3 1207.2 L2946.7 1192.1 L2971.0 1206.0 L2979.6 1221.1 Z M2946.7 1192.1 L2974.7 1178.3 L2999.0 1192.2 L2971.0 1206.0 Z M2999.0 1192.2 L3004.2 1206.9 L2979.6 1221.1 L2971.0 1206.0 Z M3171.2 1182.5 L3246.7 1219.1 L3231.6 1255.8 L3151.8 1208.4 Z M3171.2 1182.5 L3246.7 1219.1 L3272.7 1234.1 L3197.3 1197.4 Z M3272.7 1234.1 L3257.6 1270.7 L3231.6 1255.8 L3246.7 1219.1 Z M3231.6 1255.8 L3151.8 1208.4 L3177.9 1223.3 L3257.6 1270.7 Z M3151.8 1208.4 L3171.2 1182.5 L3197.3 1197.4 L3177.9 1223.3 Z M3197.3 1197.4 L3272.7 1234.1 L3257.6 1270.7 L3177.9 1223.3 Z M3395.3 923.2 L3408.2 1039.6 L3374.6 1024.5 Z M3430.0 943.1 L3443.0 1059.5 L3408.2 1039.6 L3395.3 923.2 Z M3443.0 1059.5 L3409.3 1044.4 L3374.6 1024.5 L3408.2 1039.6 Z M3374.6 1024.5 L3395.3 923.2 L3430.0 943.1 L3409.3 1044.4 Z M3430.0 943.1 L3443.0 1059.5 L3409.3 1044.4 Z M1148.0 1301.6 L1224.7 1329.6 L1205.3 1397.3 L1169.5 1387.8 L1148.0 1389.9 Z M1148.0 1301.6 L1224.7 1329.6 L1243.8 1340.5 L1167.1 1312.5 Z M1243.8 1340.5 L1224.4 1408.2 L1205.3 1397.3 L1224.7 1329.6 Z M1224.4 1408.2 L1188.6 1398.7 L1169.5 1387.8 L1205.3 1397.3 Z M1188.6 1398.7 L1167.1 1400.9 L1148.0 1389.9 L1169.5 1387.8 Z M1148.0 1389.9 L1148.0 1301.6 L1167.1 1312.5 L1167.1 1400.9 Z M1167.1 1312.5 L1243.8 1340.5 L1224.4 1408.2 L1188.6 1398.7 L1167.1 1400.9 Z M1235.9 1348.0 L1310.0 1375.1 L1288.5 1437.6 L1261.3 1427.7 L1264.8 1414.8 L1219.5 1396.7 Z M1235.9 1348.0 L1310.0 1375.1 L1330.9 1387.1 L1256.7 1359.9 Z M1330.9 1387.1 L1309.3 1449.6 L1288.5 1437.6 L1310.0 1375.1 Z M1309.3 1449.6 L1282.2 1439.7 L1261.3 1427.7 L1288.5 1437.6 Z M1261.3 1427.7 L1264.8 1414.8 L1285.6 1426.7 L1282.2 1439.7 Z M1285.6 1426.7 L1240.3 1408.6 L1219.5 1396.7 L1264.8 1414.8 Z M1219.5 1396.7 L1235.9 1348.0 L1256.7 1359.9 L1240.3 1408.6 Z M1256.7 1359.9 L1330.9 1387.1 L1309.3 1449.6 L1282.2 1439.7 L1285.6 1426.7 L1240.3 1408.6 Z M1319.1 1375.0 L1393.6 1398.7 L1368.6 1488.4 L1324.7 1475.4 L1329.8 1454.8 L1299.7 1445.3 Z M1319.1 1375.0 L1393.6 1398.7 L1416.2 1411.6 L1341.6 1387.9 Z M1416.2 1411.6 L1391.2 1501.3 L1368.6 1488.4 L1393.6 1398.7 Z M1391.2 1501.3 L1347.2 1488.4 L1324.7 1475.4 L1368.6 1488.4 Z M1324.7 1475.4 L1329.8 1454.8 L1352.4 1467.7 L1347.2 1488.4 Z M1352.4 1467.7 L1322.2 1458.2 L1299.7 1445.3 L1329.8 1454.8 Z M1299.7 1445.3 L1319.1 1375.0 L1341.6 1387.9 L1322.2 1458.2 Z M1341.6 1387.9 L1416.2 1411.6 L1391.2 1501.3 L1347.2 1488.4 L1352.4 1467.7 L1322.2 1458.2 Z M1424.7 1401.7 L1491.5 1421.6 L1466.9 1504.3 L1426.8 1491.4 L1439.8 1443.1 L1416.1 1434.5 Z M1424.7 1401.7 L1491.5 1421.6 L1514.1 1434.5 L1447.2 1414.7 Z M1514.1 1434.5 L1489.5 1517.2 L1466.9 1504.3 L1491.5 1421.6 Z M1489.5 1517.2 L1449.4 1504.3 L1426.8 1491.4 L1466.9 1504.3 Z M1426.8 1491.4 L1439.8 1443.1 L1462.3 1456.0 L1449.4 1504.3 Z M1462.3 1456.0 L1438.6 1447.4 L1416.1 1434.5 L1439.8 1443.1 Z M1416.1 1434.5 L1424.7 1401.7 L1447.2 1414.7 L1438.6 1447.4 Z M1447.2 1414.7 L1514.1 1434.5 L1489.5 1517.2 L1449.4 1504.3 L1462.3 1456.0 L1438.6 1447.4 Z M1557.4 1448.6 L1584.6 1460.2 L1545.8 1542.1 L1475.5 1506.8 L1498.4 1455.0 L1543.6 1475.3 Z M1557.4 1448.6 L1584.6 1460.2 L1608.9 1474.1 L1581.7 1462.5 Z M1608.9 1474.1 L1570.1 1556.0 L1545.8 1542.1 L1584.6 1460.2 Z M1570.1 1556.0 L1499.8 1520.7 L1475.5 1506.8 L1545.8 1542.1 Z M1475.5 1506.8 L1498.4 1455.0 L1522.7 1469.0 L1499.8 1520.7 Z M1498.4 1455.0 L1543.6 1475.3 L1567.9 1489.2 L1522.7 1469.0 Z M1543.6 1475.3 L1557.4 1448.6 L1581.7 1462.5 L1567.9 1489.2 Z M1581.7 1462.5 L1608.9 1474.1 L1570.1 1556.0 L1499.8 1520.7 L1522.7 1469.0 L1567.9 1489.2 Z M1582.0 1487.9 L1658.7 1500.0 L1647.5 1574.1 L1569.9 1561.2 Z M1582.0 1487.9 L1658.7 1500.0 L1681.3 1512.9 L1604.6 1500.9 Z M1681.3 1512.9 L1670.1 1587.1 L1647.5 1574.1 L1658.7 1500.0 Z M1670.1 1587.1 L1592.5 1574.1 L1569.9 1561.2 L1647.5 1574.1 Z M1569.9 1561.2 L1582.0 1487.9 L1604.6 1500.9 L1592.5 1574.1 Z M1604.6 1500.9 L1681.3 1512.9 L1670.1 1587.1 L1592.5 1574.1 Z M1666.9 1542.4 L1816.9 1614.4 L1787.6 1680.3 L1719.9 1649.7 L1725.1 1638.1 L1640.2 1597.2 Z M1666.9 1542.4 L1816.9 1614.4 L1842.9 1629.3 L1692.9 1557.3 Z M1842.9 1629.3 L1813.6 1695.3 L1787.6 1680.3 L1816.9 1614.4 Z M1813.6 1695.3 L1745.9 1664.7 L1719.9 1649.7 L1787.6 1680.3 Z M1719.9 1649.7 L1725.1 1638.1 L1751.1 1653.0 L1745.9 1664.7 Z M1751.1 1653.0 L1666.2 1612.1 L1640.2 1597.2 L1725.1 1638.1 Z M1640.2 1597.2 L1666.9 1542.4 L1692.9 1557.3 L1666.2 1612.1 Z M1692.9 1557.3 L1842.9 1629.3 L1813.6 1695.3 L1745.9 1664.7 L1751.1 1653.0 L1666.2 1612.1 Z M1825.9 1642.6 L1884.5 1639.6 L1888.9 1709.4 L1873.8 1712.4 L1874.6 1741.7 L1832.4 1743.9 Z M1825.9 1642.6 L1884.5 1639.6 L1914.1 1656.5 L1855.4 1659.5 Z M1914.1 1656.5 L1918.4 1726.3 L1888.9 1709.4 L1884.5 1639.6 Z M1918.4 1726.3 L1903.3 1729.3 L1873.8 1712.4 L1888.9 1709.4 Z M1903.3 1729.3 L1904.1 1758.6 L1874.6 1741.7 L1873.8 1712.4 Z M1904.1 1758.6 L1861.9 1760.8 L1832.4 1743.9 L1874.6 1741.7 Z M1832.4 1743.9 L1825.9 1642.6 L1855.4 1659.5 L1861.9 1760.8 Z M1855.4 1659.5 L1914.1 1656.5 L1918.4 1726.3 L1903.3 1729.3 L1904.1 1758.6 L1861.9 1760.8 Z M1926.4 1694.3 L1995.3 1752.5 L1967.3 1789.1 L1950.5 1771.9 L1922.0 1790.4 L1875.9 1752.5 Z M1955.9 1711.2 L2024.8 1769.4 L1995.3 1752.5 L1926.4 1694.3 Z M2024.8 1769.4 L1996.8 1806.0 L1967.3 1789.1 L1995.3 1752.5 Z M1967.3 1789.1 L1950.5 1771.9 L1980.0 1788.8 L1996.8 1806.0 Z M1980.0 1788.8 L1951.6 1807.3 L1922.0 1790.4 L1950.5 1771.9 Z M1922.0 1790.4 L1875.9 1752.5 L1905.4 1769.4 L1951.6 1807.3 Z M1875.9 1752.5 L1926.4 1694.3 L1955.9 1711.2 L1905.4 1769.4 Z M1955.9 1711.2 L2024.8 1769.4 L1996.8 1806.0 L1980.0 1788.8 L1951.6 1807.3 L1905.4 1769.4 Z M1343.6 1701.9 L1406.1 1740.7 L1371.6 1795.9 L1309.5 1755.8 Z M1374.8 1719.8 L1437.3 1758.6 L1406.1 1740.7 L1343.6 1701.9 Z M1437.3 1758.6 L1402.8 1813.8 L1371.6 1795.9 L1406.1 1740.7 Z M1371.6 1795.9 L1309.5 1755.8 L1340.8 1773.7 L1402.8 1813.8 Z M1309.5 1755.8 L1343.6 1701.9 L1374.8 1719.8 L1340.8 1773.7 Z M1374.8 1719.8 L1437.3 1758.6 L1402.8 1813.8 L1340.8 1773.7 Z M1419.4 1737.3 L1488.4 1777.4 L1450.5 1844.2 L1381.5 1805.4 Z M1450.7 1755.2 L1519.7 1795.3 L1488.4 1777.4 L1419.4 1737.3 Z M1519.7 1795.3 L1481.7 1862.1 L1450.5 1844.2 L1488.4 1777.4 Z M1481.7 1862.1 L1412.8 1823.3 L1381.5 1805.4 L1450.5 1844.2 Z M1381.5 1805.4 L1419.4 1737.3 L1450.7 1755.2 L1412.8 1823.3 Z M1450.7 1755.2 L1519.7 1795.3 L1481.7 1862.1 L1412.8 1823.3 Z M1507.4 1792.4 L1578.5 1821.3 L1559.1 1873.0 L1481.5 1847.2 Z M1507.4 1792.4 L1578.5 1821.3 L1604.6 1836.2 L1533.4 1807.3 Z M1604.6 1836.2 L1585.2 1887.9 L1559.1 1873.0 L1578.5 1821.3 Z M1585.2 1887.9 L1507.6 1862.1 L1481.5 1847.2 L1559.1 1873.0 Z M1481.5 1847.2 L1507.4 1792.4 L1533.4 1807.3 L1507.6 1862.1 Z M1533.4 1807.3 L1604.6 1836.2 L1585.2 1887.9 L1507.6 1862.1 Z M1978.9 1764.6 L2029.3 1764.6 L2029.3 1850.8 L1978.9 1850.8 Z M1978.9 1764.6 L2029.3 1764.6 L2064.1 1784.5 L2013.6 1784.5 Z M2064.1 1784.5 L2064.1 1870.7 L2029.3 1850.8 L2029.3 1764.6 Z M2064.1 1870.7 L2013.6 1870.7 L1978.9 1850.8 L2029.3 1850.8 Z M1978.9 1850.8 L1978.9 1764.6 L2013.6 1784.5 L2013.6 1870.7 Z M2013.6 1784.5 L2064.1 1784.5 L2064.1 1870.7 L2013.6 1870.7 Z M2669.6 1220.0 L2744.0 1294.3 L2711.6 1323.4 L2640.5 1245.8 Z M2699.1 1236.9 L2773.5 1311.2 L2744.0 1294.3 L2669.6 1220.0 Z M2773.5 1311.2 L2741.1 1340.3 L2711.6 1323.4 L2744.0 1294.3 Z M2711.6 1323.4 L2640.5 1245.8 L2670.0 1262.7 L2741.1 1340.3 Z M2640.5 1245.8 L2669.6 1220.0 L2699.1 1236.9 L2670.0 1262.7 Z M2699.1 1236.9 L2773.5 1311.2 L2741.1 1340.3 L2670.0 1262.7 Z M2982.8 1204.1 L3028.1 1247.2 L2958.3 1322.6 L2931.1 1296.8 L2957.0 1266.6 L2929.0 1234.3 L2950.5 1211.8 L2963.4 1220.5 Z M3014.1 1222.0 L3059.3 1265.1 L3028.1 1247.2 L2982.8 1204.1 Z M3059.3 1265.1 L2989.5 1340.5 L2958.3 1322.6 L3028.1 1247.2 Z M2958.3 1322.6 L2931.1 1296.8 L2962.4 1314.7 L2989.5 1340.5 Z M2931.1 1296.8 L2957.0 1266.6 L2988.2 1284.5 L2962.4 1314.7 Z M2957.0 1266.6 L2929.0 1234.3 L2960.2 1252.2 L2988.2 1284.5 Z M2929.0 1234.3 L2950.5 1211.8 L2981.8 1229.7 L2960.2 1252.2 Z M2981.8 1229.7 L2994.7 1238.4 L2963.4 1220.5 L2950.5 1211.8 Z M2963.4 1220.5 L2982.8 1204.1 L3014.1 1222.0 L2994.7 1238.4 Z M3014.1 1222.0 L3059.3 1265.1 L2989.5 1340.5 L2962.4 1314.7 L2988.2 1284.5 L2960.2 1252.2 L2981.8 1229.7 L2994.7 1238.4 Z M3047.5 1326.1 L3079.8 1374.3 L3043.2 1400.2 L3010.9 1347.6 Z M3078.7 1344.0 L3111.1 1392.2 L3079.8 1374.3 L3047.5 1326.1 Z M3111.1 1392.2 L3074.4 1418.1 L3043.2 1400.2 L3079.8 1374.3 Z M3043.2 1400.2 L3010.9 1347.6 L3042.1 1365.5 L3074.4 1418.1 Z M3010.9 1347.6 L3047.5 1326.1 L3078.7 1344.0 L3042.1 1365.5 Z M3078.7 1344.0 L3111.1 1392.2 L3074.4 1418.1 L3042.1 1365.5 Z M3117.7 1652.2 L3239.7 1757.8 L3207.4 1795.8 L3084.6 1688.0 Z M3150.7 1671.1 L3272.7 1776.7 L3239.7 1757.8 L3117.7 1652.2 Z M3272.7 1776.7 L3240.4 1814.7 L3207.4 1795.8 L3239.7 1757.8 Z M3207.4 1795.8 L3084.6 1688.0 L3117.5 1706.9 L3240.4 1814.7 Z M3084.6 1688.0 L3117.7 1652.2 L3150.7 1671.1 L3117.5 1706.9 Z M3150.7 1671.1 L3272.7 1776.7 L3240.4 1814.7 L3117.5 1706.9 Z" fill="#2a1c08" fill-opacity="0.185" fill-rule="nonzero"/>
<polygon points="1524.8,97.8 1548.5,97.8 1539.9,107.2 1531.3,102.9" fill="#f7e8d7" stroke="#e3d2bb" stroke-width="1.3" stroke-linejoin="round"/>
<polygon points="1481.7,112.4 1514.1,110.7 1519.2,199.9 1470.9,202.9 1466.6,152.5 1483.9,150.3" fill="#f7e8d7" stroke="#e3d2bb" stroke-width="1.3" stroke-linejoin="round"/>
<polygon points="1270.5,179.2 1328.7,208.5 1301.6,262.4 1244.7,231.4" fill="#f7e8d7" stroke="#e3d2bb" stroke-width="1.3" stroke-linejoin="round"/>
<polygon points="1402.0,195.6 1467.9,236.6 1440.8,275.3 1423.5,263.3 1405.0,284.8 1363.2,255.9" fill="#f7e8d7" stroke="#e3d2bb" stroke-width="1.3" stroke-linejoin="round"/>
<polygon points="1322.2,287.0 1387.8,287.0 1387.8,345.6 1340.8,345.6 1340.8,316.3 1322.2,316.3" fill="#f7e8d7" stroke="#e3d2bb" stroke-width="1.3" stroke-linejoin="round"/>
<polygon points="1703.7,176.2 1759.7,190.0 1742.5,261.1 1687.8,247.3" fill="#f7e8d7" stroke="#e3d2bb" stroke-width="1.3" stroke-linejoin="round"/>
<polygon points="1545.5,337.0 1591.6,378.8 1554.1,422.8 1527.0,398.2 1537.8,385.3 1518.4,361.6" fill="#f7e8d7" stroke="#e3d2bb" stroke-width="1.3" stroke-linejoin="round"/>
<polygon points="1618.8,366.7 1649.8,388.3 1632.6,411.1 1645.5,430.5 1617.5,467.2 1604.6,456.4 1598.1,460.7 1574.4,424.1" fill="#f7e8d7" stroke="#e3d2bb" stroke-width="1.3" stroke-linejoin="round"/>
<polygon points="1680.0,430.5 1705.9,440.0 1686.5,480.1 1663.6,468.4" fill="#f7e8d7" stroke="#e3d2bb" stroke-width="1.3" stroke-linejoin="round"/>
<polygon points="1858.9,375.3 1909.3,411.1 1856.7,483.5 1805.9,445.6" fill="#f7e8d7" stroke="#e3d2bb" stroke-width="1.3" stroke-linejoin="round"/>
<polygon points="1930.0,474.5 1980.0,474.5 2011.9,474.5 2011.9,546.9 1930.0,546.9" fill="#f7e8d7" stroke="#e3d2bb" stroke-width="1.3" stroke-linejoin="round"/>
<polygon points="1852.4,94.3 1908.4,94.3 1895.5,129.7 1848.1,107.2" fill="#f7e8d7" stroke="#e3d2bb" stroke-width="1.3" stroke-linejoin="round"/>
<polygon points="1923.5,103.8 1972.2,103.8 1972.2,152.5 1923.5,150.3" fill="#f7e8d7" stroke="#e3d2bb" stroke-width="1.3" stroke-linejoin="round"/>
<polygon points="1220.9,434.8 1267.1,458.5 1244.7,503.8 1197.2,480.1" fill="#f7e8d7" stroke="#e3d2bb" stroke-width="1.3" stroke-linejoin="round"/>
<polygon points="1268.4,480.1 1313.6,477.9 1317.1,525.3 1271.8,528.8" fill="#f7e8d7" stroke="#e3d2bb" stroke-width="1.3" stroke-linejoin="round"/>
<polygon points="1354.6,541.3 1396.4,549.1 1389.1,584.8 1348.1,577.1" fill="#f7e8d7" stroke="#e3d2bb" stroke-width="1.3" stroke-linejoin="round"/>
<polygon points="1434.3,550.3 1505.4,585.7 1496.8,605.1 1539.1,626.6 1523.5,659.0 1409.7,600.8" fill="#f7e8d7" stroke="#e3d2bb" stroke-width="1.3" stroke-linejoin="round"/>
<polygon points="1661.9,676.7 1749.0,707.3 1733.9,749.1 1647.7,716.8" fill="#f7e8d7" stroke="#e3d2bb" stroke-width="1.3" stroke-linejoin="round"/>
<polygon points="2068.4,181.4 2083.4,195.6 2075.7,205.5 2112.8,233.5 2121.4,225.8 2137.3,238.7 2070.5,323.6 2056.7,312.0 2063.2,302.5 2025.3,272.3 2011.0,281.8 1997.2,268.9" fill="#f7e8d7" stroke="#e3d2bb" stroke-width="1.3" stroke-linejoin="round"/>
<polygon points="2275.3,364.6 2328.3,364.6 2328.3,412.4 2302.4,412.4 2302.4,442.2 2275.3,442.2" fill="#f7e8d7" stroke="#e3d2bb" stroke-width="1.3" stroke-linejoin="round"/>
<polygon points="2385.2,421.8 2435.7,459.8 2421.3,479.6 2410.8,473.8 2371.2,526.2 2378.2,535.5 2364.2,551.8 2314.1,512.2" fill="#f7e8d7" stroke="#e3d2bb" stroke-width="1.3" stroke-linejoin="round"/>
<polygon points="2460.9,483.1 2513.3,522.7 2439.9,615.2 2388.2,573.9 2405.0,551.8 2415.5,557.6 2455.0,506.4 2448.1,499.4" fill="#f7e8d7" stroke="#e3d2bb" stroke-width="1.3" stroke-linejoin="round"/>
<polygon points="2600.4,207.4 2694.5,271.4 2615.9,387.9 2521.8,317.7" fill="#f7e8d7" stroke="#e3d2bb" stroke-width="1.3" stroke-linejoin="round"/>
<polygon points="2056.7,555.5 2085.6,574.9 2102.8,552.1 2130.0,571.9 2084.3,636.6 2066.2,623.6 2070.5,616.7 2048.1,602.1 2040.3,613.7 2021.8,600.8" fill="#f7e8d7" stroke="#e3d2bb" stroke-width="1.3" stroke-linejoin="round"/>
<polygon points="2152.4,574.1 2199.0,609.4 2143.8,684.8 2086.5,651.2" fill="#f7e8d7" stroke="#e3d2bb" stroke-width="1.3" stroke-linejoin="round"/>
<polygon points="2186.9,665.4 2214.9,691.3 2195.5,715.0 2165.3,691.3" fill="#f7e8d7" stroke="#e3d2bb" stroke-width="1.3" stroke-linejoin="round"/>
<polygon points="2600.6,606.5 2625.1,625.2 2618.1,638.0 2639.1,655.5 2618.1,685.7 2568.0,647.3" fill="#f7e8d7" stroke="#e3d2bb" stroke-width="1.3" stroke-linejoin="round"/>
<polygon points="2674.0,647.3 2701.9,677.6 2656.5,719.5 2628.6,689.2" fill="#f7e8d7" stroke="#e3d2bb" stroke-width="1.3" stroke-linejoin="round"/>
<polygon points="2494.6,707.9 2509.8,712.5 2505.1,726.5 2490.5,720.7" fill="#f7e8d7" stroke="#e3d2bb" stroke-width="1.3" stroke-linejoin="round"/>
<polygon points="2878.3,275.3 2922.3,309.8 2894.7,345.6 2850.3,311.1" fill="#f7e8d7" stroke="#e3d2bb" stroke-width="1.3" stroke-linejoin="round"/>
<polygon points="2999.0,363.7 3039.9,396.9 3011.9,432.7 2971.0,399.5" fill="#f7e8d7" stroke="#e3d2bb" stroke-width="1.3" stroke-linejoin="round"/>
<polygon points="3455.5,352.8 3246.0,612.7 3333.3,690.3 3308.1,723.3 3364.3,769.8 3494.3,612.7" fill="#f7e8d7" stroke="#e3d2bb" stroke-width="1.3" stroke-linejoin="round"/>
<polygon points="2182.6,665.1 2230.9,706.9 2204.1,737.5 2156.7,693.1" fill="#f7e8d7" stroke="#e3d2bb" stroke-width="1.3" stroke-linejoin="round"/>
<polygon points="2277.4,698.7 2304.1,719.0 2264.5,769.4 2223.5,734.1 2240.8,713.4 2260.2,724.1" fill="#f7e8d7" stroke="#e3d2bb" stroke-width="1.3" stroke-linejoin="round"/>
<polygon points="2336.9,739.2 2386.0,787.1 2355.0,818.1 2306.3,768.5" fill="#f7e8d7" stroke="#e3d2bb" stroke-width="1.3" stroke-linejoin="round"/>
<polygon points="2456.3,775.9 2495.1,812.9 2445.5,862.5 2406.7,824.6" fill="#f7e8d7" stroke="#e3d2bb" stroke-width="1.3" stroke-linejoin="round"/>
<polygon points="2527.4,848.3 2567.1,874.1 2526.6,937.9 2484.3,910.8" fill="#f7e8d7" stroke="#e3d2bb" stroke-width="1.3" stroke-linejoin="round"/>
<polygon points="2625.7,881.5 2679.1,921.6 2661.0,947.4 2665.3,950.4 2635.2,989.2 2577.0,943.1" fill="#f7e8d7" stroke="#e3d2bb" stroke-width="1.3" stroke-linejoin="round"/>
<polygon points="2725.7,966.8 2780.0,999.1 2792.9,1007.8 2770.9,1031.5 2751.6,1019.8 2718.4,1062.9 2680.4,1033.6" fill="#f7e8d7" stroke="#e3d2bb" stroke-width="1.3" stroke-linejoin="round"/>
<polygon points="2723.1,707.3 2751.2,729.7 2762.8,714.7 2780.5,728.4 2731.8,788.8 2686.5,752.2" fill="#f7e8d7" stroke="#e3d2bb" stroke-width="1.3" stroke-linejoin="round"/>
<polygon points="2798.6,753.4 2840.8,800.0 2794.3,841.8 2752.0,794.4" fill="#f7e8d7" stroke="#e3d2bb" stroke-width="1.3" stroke-linejoin="round"/>
<polygon points="2958.1,884.9 3011.1,892.2 2999.0,956.9 2953.7,948.3 2958.1,919.4 2953.7,918.5" fill="#f7e8d7" stroke="#e3d2bb" stroke-width="1.3" stroke-linejoin="round"/>
<polygon points="3065.8,930.2 3088.7,971.1 3022.7,1007.8 2999.0,964.7" fill="#f7e8d7" stroke="#e3d2bb" stroke-width="1.3" stroke-linejoin="round"/>
<polygon points="3087.4,988.4 3149.0,1022.8 3114.5,1085.3 3050.7,1048.7" fill="#f7e8d7" stroke="#e3d2bb" stroke-width="1.3" stroke-linejoin="round"/>
<polygon points="3176.6,1047.8 3196.0,1098.3 3141.2,1119.0 3124.0,1074.6" fill="#f7e8d7" stroke="#e3d2bb" stroke-width="1.3" stroke-linejoin="round"/>
<polygon points="3294.3,1107.8 3343.8,1152.2 3313.7,1186.6 3264.9,1141.4" fill="#f7e8d7" stroke="#e3d2bb" stroke-width="1.3" stroke-linejoin="round"/>
<polygon points="2906.3,1090.5 2937.4,1126.3 2884.8,1171.6 2855.5,1135.8" fill="#f7e8d7" stroke="#e3d2bb" stroke-width="1.3" stroke-linejoin="round"/>
<polygon points="2956.8,1133.6 2980.5,1173.7 2933.5,1200.9 2910.6,1162.1" fill="#f7e8d7" stroke="#e3d2bb" stroke-width="1.3" stroke-linejoin="round"/>
<polygon points="2999.0,1192.2 3004.2,1206.9 2979.6,1221.1 2971.0,1206.0" fill="#f7e8d7" stroke="#e3d2bb" stroke-width="1.3" stroke-linejoin="round"/>
<polygon points="3197.3,1197.4 3272.7,1234.1 3257.6,1270.7 3177.9,1223.3" fill="#f7e8d7" stroke="#e3d2bb" stroke-width="1.3" stroke-linejoin="round"/>
<polygon points="3430.0,943.1 3443.0,1059.5 3409.3,1044.4" fill="#f7e8d7" stroke="#e3d2bb" stroke-width="1.3" stroke-linejoin="round"/>
<polygon points="1167.1,1312.5 1243.8,1340.5 1224.4,1408.2 1188.6,1398.7 1167.1,1400.9" fill="#f7e8d7" stroke="#e3d2bb" stroke-width="1.3" stroke-linejoin="round"/>
<polygon points="1256.7,1359.9 1330.9,1387.1 1309.3,1449.6 1282.2,1439.7 1285.6,1426.7 1240.3,1408.6" fill="#f7e8d7" stroke="#e3d2bb" stroke-width="1.3" stroke-linejoin="round"/>
<polygon points="1341.6,1387.9 1416.2,1411.6 1391.2,1501.3 1347.2,1488.4 1352.4,1467.7 1322.2,1458.2" fill="#f7e8d7" stroke="#e3d2bb" stroke-width="1.3" stroke-linejoin="round"/>
<polygon points="1447.2,1414.7 1514.1,1434.5 1489.5,1517.2 1449.4,1504.3 1462.3,1456.0 1438.6,1447.4" fill="#f7e8d7" stroke="#e3d2bb" stroke-width="1.3" stroke-linejoin="round"/>
<polygon points="1581.7,1462.5 1608.9,1474.1 1570.1,1556.0 1499.8,1520.7 1522.7,1469.0 1567.9,1489.2" fill="#f7e8d7" stroke="#e3d2bb" stroke-width="1.3" stroke-linejoin="round"/>
<polygon points="1604.6,1500.9 1681.3,1512.9 1670.1,1587.1 1592.5,1574.1" fill="#f7e8d7" stroke="#e3d2bb" stroke-width="1.3" stroke-linejoin="round"/>
<polygon points="1692.9,1557.3 1842.9,1629.3 1813.6,1695.3 1745.9,1664.7 1751.1,1653.0 1666.2,1612.1" fill="#f7e8d7" stroke="#e3d2bb" stroke-width="1.3" stroke-linejoin="round"/>
<polygon points="1855.4,1659.5 1914.1,1656.5 1918.4,1726.3 1903.3,1729.3 1904.1,1758.6 1861.9,1760.8" fill="#f7e8d7" stroke="#e3d2bb" stroke-width="1.3" stroke-linejoin="round"/>
<polygon points="1955.9,1711.2 2024.8,1769.4 1996.8,1806.0 1980.0,1788.8 1951.6,1807.3 1905.4,1769.4" fill="#f7e8d7" stroke="#e3d2bb" stroke-width="1.3" stroke-linejoin="round"/>
<polygon points="1374.8,1719.8 1437.3,1758.6 1402.8,1813.8 1340.8,1773.7" fill="#f7e8d7" stroke="#e3d2bb" stroke-width="1.3" stroke-linejoin="round"/>
<polygon points="1450.7,1755.2 1519.7,1795.3 1481.7,1862.1 1412.8,1823.3" fill="#f7e8d7" stroke="#e3d2bb" stroke-width="1.3" stroke-linejoin="round"/>
<polygon points="1533.4,1807.3 1604.6,1836.2 1585.2,1887.9 1507.6,1862.1" fill="#f7e8d7" stroke="#e3d2bb" stroke-width="1.3" stroke-linejoin="round"/>
<polygon points="2013.6,1784.5 2064.1,1784.5 2064.1,1870.7 2013.6,1870.7" fill="#f7e8d7" stroke="#e3d2bb" stroke-width="1.3" stroke-linejoin="round"/>
<polygon points="2699.1,1236.9 2773.5,1311.2 2741.1,1340.3 2670.0,1262.7" fill="#f7e8d7" stroke="#e3d2bb" stroke-width="1.3" stroke-linejoin="round"/>
<polygon points="3014.1,1222.0 3059.3,1265.1 2989.5,1340.5 2962.4,1314.7 2988.2,1284.5 2960.2,1252.2 2981.8,1229.7 2994.7,1238.4" fill="#f7e8d7" stroke="#e3d2bb" stroke-width="1.3" stroke-linejoin="round"/>
<polygon points="3078.7,1344.0 3111.1,1392.2 3074.4,1418.1 3042.1,1365.5" fill="#f7e8d7" stroke="#e3d2bb" stroke-width="1.3" stroke-linejoin="round"/>
<polygon points="3150.7,1671.1 3272.7,1776.7 3240.4,1814.7 3117.5,1706.9" fill="#f7e8d7" stroke="#e3d2bb" stroke-width="1.3" stroke-linejoin="round"/>
<text transform="translate(2192.4 883.1) rotate(26.71)" textLength="255.7" lengthAdjust="spacing" font-family="Liberation Sans,sans-serif" font-size="31" font-weight="normal" style="" fill="#efecf0" stroke="#efecf0" stroke-width="3.5" stroke-linejoin="round">TRAFALGAR RD</text>
<text transform="translate(2192.4 883.1) rotate(26.71)" textLength="255.7" lengthAdjust="spacing" font-family="Liberation Sans,sans-serif" font-size="31" font-weight="normal" style="" fill="#3a3b40" stroke="#3a3b40" stroke-width="0.7">TRAFALGAR RD</text>
<text transform="translate(1592.9 220.7) rotate(-50.38)" textLength="175.0" lengthAdjust="spacing" font-family="Liberation Sans,sans-serif" font-size="25" font-weight="normal" style="" fill="#efecf0" stroke="#efecf0" stroke-width="3.5" stroke-linejoin="round">LAWSON ST</text>
<text transform="translate(1592.9 220.7) rotate(-50.38)" textLength="175.0" lengthAdjust="spacing" font-family="Liberation Sans,sans-serif" font-size="25" font-weight="normal" style="" fill="#3a3b40" stroke="#3a3b40" stroke-width="0.7">LAWSON ST</text>
<text transform="translate(2775.2 298.4) rotate(-49.66)" textLength="221.7" lengthAdjust="spacing" font-family="Liberation Sans,sans-serif" font-size="25" font-weight="normal" style="" fill="#efecf0" stroke="#efecf0" stroke-width="3.5" stroke-linejoin="round">SHEDDON AVE</text>
<text transform="translate(2775.2 298.4) rotate(-49.66)" textLength="221.7" lengthAdjust="spacing" font-family="Liberation Sans,sans-serif" font-size="25" font-weight="normal" style="" fill="#3a3b40" stroke="#3a3b40" stroke-width="0.7">SHEDDON AVE</text>
<text transform="translate(3187.9 1509.9) rotate(-50.99)" textLength="198.6" lengthAdjust="spacing" font-family="Liberation Sans,sans-serif" font-size="25" font-weight="normal" style="" fill="#efecf0" stroke="#efecf0" stroke-width="3.5" stroke-linejoin="round">PALMER AVE</text>
<text transform="translate(3187.9 1509.9) rotate(-50.99)" textLength="198.6" lengthAdjust="spacing" font-family="Liberation Sans,sans-serif" font-size="25" font-weight="normal" style="" fill="#3a3b40" stroke="#3a3b40" stroke-width="0.7">PALMER AVE</text>
<text transform="translate(3387.2 769.4) rotate(-48.67)" textLength="200.0" lengthAdjust="spacing" font-family="Liberation Sans,sans-serif" font-size="25" font-weight="normal" style="" fill="#efecf0" stroke="#efecf0" stroke-width="3.5" stroke-linejoin="round">WALLACE RD</text>
<text transform="translate(3387.2 769.4) rotate(-48.67)" textLength="200.0" lengthAdjust="spacing" font-family="Liberation Sans,sans-serif" font-size="25" font-weight="normal" style="" fill="#3a3b40" stroke="#3a3b40" stroke-width="0.7">WALLACE RD</text>
<text transform="translate(1382.2 1627.5) rotate(25.94)" textLength="223.8" lengthAdjust="spacing" font-family="Liberation Sans,sans-serif" font-size="24" font-weight="normal" style="" fill="#efecf0" stroke="#efecf0" stroke-width="3.5" stroke-linejoin="round">RIVER SIDE DR</text>
<text transform="translate(1382.2 1627.5) rotate(25.94)" textLength="223.8" lengthAdjust="spacing" font-family="Liberation Sans,sans-serif" font-size="24" font-weight="normal" style="" fill="#3a3b40" stroke="#3a3b40" stroke-width="0.7">RIVER SIDE DR</text>
<text transform="translate(1173.5 811.4) rotate(33.16)" textLength="256.1" lengthAdjust="spacing" font-family="Liberation Sans,sans-serif" font-size="28" font-weight="normal" style="font-style:italic;" fill="#b9ddf0" stroke="#b9ddf0" stroke-width="2" stroke-linejoin="round">Sixteen Mile Creek</text>
<text transform="translate(1173.5 811.4) rotate(33.16)" textLength="256.1" lengthAdjust="spacing" font-family="Liberation Sans,sans-serif" font-size="28" font-weight="normal" style="font-style:italic;" fill="#4593dc" stroke="#4593dc" stroke-width="0.2">Sixteen Mile Creek</text>
<text transform="translate(2620.3 1772.9) rotate(38.81)" textLength="261.0" lengthAdjust="spacing" font-family="Liberation Sans,sans-serif" font-size="28" font-weight="normal" style="font-style:italic;" fill="#b9ddf0" stroke="#b9ddf0" stroke-width="2" stroke-linejoin="round">Sixteen Mile Creek</text>
<text transform="translate(2620.3 1772.9) rotate(38.81)" textLength="261.0" lengthAdjust="spacing" font-family="Liberation Sans,sans-serif" font-size="28" font-weight="normal" style="font-style:italic;" fill="#4593dc" stroke="#4593dc" stroke-width="0.2">Sixteen Mile Creek</text>
<text x="1379.1" y="351.3" text-anchor="middle" font-family="Liberation Sans,sans-serif" font-size="19.5" fill="#8e8f96" stroke="#faede5" stroke-opacity="0.5" stroke-width="2" paint-order="stroke">319</text>
<text x="1613.2" y="425.4" text-anchor="middle" font-family="Liberation Sans,sans-serif" font-size="19.5" fill="#8e8f96" stroke="#faede5" stroke-opacity="0.5" stroke-width="2" paint-order="stroke">299</text>
<text x="1386.0" y="525.0" text-anchor="middle" font-family="Liberation Sans,sans-serif" font-size="19.5" fill="#8e8f96" stroke="#faede5" stroke-opacity="0.5" stroke-width="2" paint-order="stroke">308</text>
<text x="2068.4" y="259.5" text-anchor="middle" font-family="Liberation Sans,sans-serif" font-size="19.5" fill="#8e8f96" stroke="#faede5" stroke-opacity="0.5" stroke-width="2" paint-order="stroke">288</text>
<text x="2608.0" y="303.9" text-anchor="middle" font-family="Liberation Sans,sans-serif" font-size="19.5" fill="#8e8f96" stroke="#faede5" stroke-opacity="0.5" stroke-width="2" paint-order="stroke">265</text>
<text x="2682.6" y="433.2" text-anchor="middle" font-family="Liberation Sans,sans-serif" font-size="19.5" fill="#8e8f96" stroke="#faede5" stroke-opacity="0.5" stroke-width="2" paint-order="stroke">332</text>
<text x="2452.8" y="558.2" text-anchor="middle" font-family="Liberation Sans,sans-serif" font-size="19.5" fill="#8e8f96" stroke="#faede5" stroke-opacity="0.5" stroke-width="2" paint-order="stroke">262</text>
<text x="2077.0" y="597.9" text-anchor="middle" font-family="Liberation Sans,sans-serif" font-size="19.5" fill="#8e8f96" stroke="#faede5" stroke-opacity="0.5" stroke-width="2" paint-order="stroke">275</text>
<text x="3414.0" y="571.1" text-anchor="middle" font-family="Liberation Sans,sans-serif" font-size="19.5" fill="#8e8f96" stroke="#faede5" stroke-opacity="0.5" stroke-width="2" paint-order="stroke">224</text>
<text x="2986.0" y="703.6" text-anchor="middle" font-family="Liberation Sans,sans-serif" font-size="19.5" fill="#8e8f96" stroke="#faede5" stroke-opacity="0.5" stroke-width="2" paint-order="stroke">223</text>
<text x="2858.9" y="794.0" text-anchor="middle" font-family="Liberation Sans,sans-serif" font-size="19.5" fill="#8e8f96" stroke="#faede5" stroke-opacity="0.5" stroke-width="2" paint-order="stroke">232</text>
<text x="2976.6" y="885.4" text-anchor="middle" font-family="Liberation Sans,sans-serif" font-size="19.5" fill="#8e8f96" stroke="#faede5" stroke-opacity="0.5" stroke-width="2" paint-order="stroke">230</text>
<text x="3130.5" y="1005.3" text-anchor="middle" font-family="Liberation Sans,sans-serif" font-size="19.5" fill="#8e8f96" stroke="#faede5" stroke-opacity="0.5" stroke-width="2" paint-order="stroke">216</text>
<text x="3326.6" y="968.2" text-anchor="middle" font-family="Liberation Sans,sans-serif" font-size="19.5" fill="#8e8f96" stroke="#faede5" stroke-opacity="0.5" stroke-width="2" paint-order="stroke">211</text>
<text x="2676.6" y="1058.7" text-anchor="middle" font-family="Liberation Sans,sans-serif" font-size="19.5" fill="#8e8f96" stroke="#faede5" stroke-opacity="0.5" stroke-width="2" paint-order="stroke">235</text>
<text x="2794.3" y="1148.4" text-anchor="middle" font-family="Liberation Sans,sans-serif" font-size="19.5" fill="#8e8f96" stroke="#faede5" stroke-opacity="0.5" stroke-width="2" paint-order="stroke">229</text>
<text x="3312.8" y="1147.0" text-anchor="middle" font-family="Liberation Sans,sans-serif" font-size="19.5" fill="#8e8f96" stroke="#faede5" stroke-opacity="0.5" stroke-width="2" paint-order="stroke">214</text>
<text x="2670.6" y="1234.6" text-anchor="middle" font-family="Liberation Sans,sans-serif" font-size="19.5" fill="#8e8f96" stroke="#faede5" stroke-opacity="0.5" stroke-width="2" paint-order="stroke">230</text>
<text x="2525.3" y="900.5" text-anchor="middle" font-family="Liberation Sans,sans-serif" font-size="19.5" fill="#8e8f96" stroke="#faede5" stroke-opacity="0.5" stroke-width="2" paint-order="stroke">247</text>
<text x="3114.0" y="1454.0" text-anchor="middle" font-family="Liberation Sans,sans-serif" font-size="19.5" fill="#8e8f96" stroke="#faede5" stroke-opacity="0.5" stroke-width="2" paint-order="stroke">301</text>
<text x="3053.7" y="1638.5" text-anchor="middle" font-family="Liberation Sans,sans-serif" font-size="19.5" fill="#8e8f96" stroke="#faede5" stroke-opacity="0.5" stroke-width="2" paint-order="stroke">220</text>
<text x="3432.0" y="1237.0" text-anchor="middle" font-family="Liberation Sans,sans-serif" font-size="19.5" fill="#8e8f96" stroke="#faede5" stroke-opacity="0.5" stroke-width="2" paint-order="stroke">12</text>
<g transform="translate(2554.0 481.9)"><rect x="-1.5" y="-1.5" width="31" height="31" rx="8" fill="#fff"/><rect width="28" height="28" rx="6.500" fill="#5b6fd0"/><path d="M7.500 7.500 a2 2 0 0 1 2 -2 h9 a2 2 0 0 1 2 2 V19.500 h-13z M9 9 h10 v5 h-10z" fill="#fff" fill-rule="evenodd"/><circle cx="9.800" cy="17" r="1.100" fill="#5b6fd0"/><circle cx="18.200" cy="17" r="1.100" fill="#5b6fd0"/><rect x="8.200" y="19.500" width="2.800" height="2.600" fill="#fff"/><rect x="17" y="19.500" width="2.800" height="2.600" fill="#fff"/><rect x="10" y="6.300" width="8" height="1.300" fill="#5b6fd0"/></g>
<g transform="translate(2639.7 484.9)"><rect x="-1.5" y="-1.5" width="31" height="31" rx="8" fill="#fff"/><rect width="28" height="28" rx="6.500" fill="#5b6fd0"/><path d="M7.500 7.500 a2 2 0 0 1 2 -2 h9 a2 2 0 0 1 2 2 V19.500 h-13z M9 9 h10 v5 h-10z" fill="#fff" fill-rule="evenodd"/><circle cx="9.800" cy="17" r="1.100" fill="#5b6fd0"/><circle cx="18.200" cy="17" r="1.100" fill="#5b6fd0"/><rect x="8.200" y="19.500" width="2.800" height="2.600" fill="#fff"/><rect x="17" y="19.500" width="2.800" height="2.600" fill="#fff"/><rect x="10" y="6.300" width="8" height="1.300" fill="#5b6fd0"/></g>
<g transform="translate(3115.6 855.8)"><rect x="-1.5" y="-1.5" width="31" height="31" rx="8" fill="#fff"/><rect width="28" height="28" rx="6.500" fill="#5b6fd0"/><path d="M7.500 7.500 a2 2 0 0 1 2 -2 h9 a2 2 0 0 1 2 2 V19.500 h-13z M9 9 h10 v5 h-10z" fill="#fff" fill-rule="evenodd"/><circle cx="9.800" cy="17" r="1.100" fill="#5b6fd0"/><circle cx="18.200" cy="17" r="1.100" fill="#5b6fd0"/><rect x="8.200" y="19.500" width="2.800" height="2.600" fill="#fff"/><rect x="17" y="19.500" width="2.800" height="2.600" fill="#fff"/><rect x="10" y="6.300" width="8" height="1.300" fill="#5b6fd0"/></g>
<g transform="translate(3212.2 998.0)"><rect x="-1.5" y="-1.5" width="31" height="31" rx="8" fill="#fff"/><rect width="28" height="28" rx="6.500" fill="#5b6fd0"/><path d="M7.500 7.500 a2 2 0 0 1 2 -2 h9 a2 2 0 0 1 2 2 V19.500 h-13z M9 9 h10 v5 h-10z" fill="#fff" fill-rule="evenodd"/><circle cx="9.800" cy="17" r="1.100" fill="#5b6fd0"/><circle cx="18.200" cy="17" r="1.100" fill="#5b6fd0"/><rect x="8.200" y="19.500" width="2.800" height="2.600" fill="#fff"/><rect x="17" y="19.500" width="2.800" height="2.600" fill="#fff"/><rect x="10" y="6.300" width="8" height="1.300" fill="#5b6fd0"/></g></svg>
</div>
<div class="abs" style="left:1182px;top:98px;width:10px;height:1752px;background:linear-gradient(90deg,rgba(60,40,30,.06),rgba(60,40,30,0))"></div>

<div id="edge-shadow" class="abs" style="left:3430px;top:800px;width:20px;height:90px;box-shadow:0 0 45px 18px rgba(40,20,10,.22)"></div>
<!-- top bar widgets -->
<svg style="left:16px;top:42px" width="30" height="30" viewBox="0 0 30 30"><g stroke="#fff" stroke-width="4.6" stroke-linecap="round"><line x1="4.5" y1="4" x2="23.500" y2="4"/><line x1="4.5" y1="14" x2="23.500" y2="14"/><line x1="4.5" y1="24" x2="23.500" y2="24"/></g></svg>
<svg style="left:66px;top:32px" width="48" height="48" viewBox="0 0 48 48"><defs><linearGradient id="lg" x1="0" y1="0" x2="1" y2="1"><stop offset="0" stop-color="#4a5cf2"/><stop offset="1" stop-color="#5eaaf4"/></linearGradient></defs><rect width="48" height="48" rx="8" fill="url(#lg)"/><g transform="translate(28.200 20) rotate(45)" fill="#f7f8fb"><path fill-rule="evenodd" d="M-7.200 -5.900 a1.300 1.300 0 0 1 1.300 -1.300 h11.800 a1.300 1.300 0 0 1 1.300 1.300 v11.800 a1.300 1.300 0 0 1 -1.300 1.300 h-11.800 a1.300 1.300 0 0 1 -1.300 -1.300z M-5.300 4.300 L-5.200 0.500 L-3.200 -3.400 L-1.800 -4.200 L0.500 -2.900 L-0.400 -1.400 L1.100 -0.700 L2.300 -2.900 L4.600 -2.100 L5 -0.100 L4.500 4.500z"/><path d="M-1.400 7 h2.800 v2.400 C3.700 12 3.500 16 3.300 19.600 a3.300 3.300 0 0 1 -6.600 0 C-3.500 16 -3.700 12 -1.400 9.400z"/><circle cx="-0.100" cy="19" r="1.700" fill="#5283f1"/></g></svg>
<svg style="left:224px;top:44px" width="18" height="24" viewBox="0 0 18 24"><path d="M4.500 3.500 L13 12 L4.500 20.500" fill="none" stroke="#7b878c" stroke-width="4" stroke-linecap="round" stroke-linejoin="round"/></svg>
<svg style="left:372px;top:40px" width="12" height="32" viewBox="0 0 12 32"><circle cx="6" cy="5" r="3.400" fill="#fff"/><circle cx="6" cy="16" r="3.400" fill="#fff"/><circle cx="6" cy="27" r="3.400" fill="#fff"/></svg>
<div class="abs" style="left:3051px;top:14px;width:2px;height:84px;background:#27363d"></div>
<svg style="left:3080px;top:36px" width="30" height="34" viewBox="0 0 30 34"><path d="M8 13 H5.500 a2 2 0 0 0 -2 2 V28 a2 2 0 0 0 2 2 H23.500 a2 2 0 0 0 2 -2 V15 a2 2 0 0 0 -2 -2 H21" fill="none" stroke="#fff" stroke-width="3.600" stroke-linecap="round"/><path d="M14.500 21 V5 M8.500 9.500 L14.500 3.500 L20.500 9.500" fill="none" stroke="#fff" stroke-width="3.600" stroke-linecap="round" stroke-linejoin="round"/></svg>
<div class="abs" style="left:3217px;top:14px;width:2px;height:84px;background:#27363d"></div>
<div class="abs" style="left:3243px;top:32px;width:157px;height:48px;border-radius:8px;background:#4961f4"></div>


<!-- left panel -->
<div class="abs ln" style="left:6px;top:168px;width:432px;height:2px"></div>
<div class="abs" style="left:115px;top:168px;width:85px;height:2px;background:#13212a"></div>
<div class="abs" style="left:0;top:314px;width:462px;height:60px;background:#c0ccd9"></div>
<!-- globe -->
<svg style="left:9px;top:210px" width="30" height="30" viewBox="0 0 30 30"><g fill="none" stroke="#13212a" stroke-width="2.800"><circle cx="15" cy="15" r="12"/><ellipse cx="15" cy="15" rx="5.200" ry="12"/><line x1="3" y1="15" x2="27" y2="15"/><line x1="15" y1="3" x2="15" y2="27" stroke-width="2"/></g></svg>
<!-- lighting -->
<svg style="left:8px;top:268px" width="32" height="32" viewBox="0 0 32 32"><g stroke="#13212a" stroke-width="3.800" stroke-linecap="round"><line x1="16.00" y1="2.10" x2="16.00" y2="29.90"/><line x1="28.04" y1="9.05" x2="3.96" y2="22.95"/><line x1="28.04" y1="22.95" x2="3.96" y2="9.05"/></g><circle cx="16" cy="16" r="10.400" fill="#13212a"/><path d="M11.450 20 A5.900 5.900 0 0 0 21.350 13.600 Z" fill="#fff"/></svg>
<!-- terrain -->
<svg style="left:7.100px;top:328.800px" width="34" height="30" viewBox="0 0 34 30"><path d="M16.800 5 L29.300 26.300 H4.600 Z" fill="#13212a" stroke="#13212a" stroke-width="3" stroke-linejoin="round"/><path d="M16.800 7.300 L23.700 18.300 H21 L16.800 15.200 L13.200 18.300 H10.100 Z" fill="#c0ccd9"/></svg>
<!-- atmosphere -->
<svg style="left:9px;top:392px" width="30" height="24" viewBox="0 0 30 24"><path d="M1 22 V17 a14 15 0 0 1 28 0 V22z" fill="#c6cbce"/><path d="M1 22 V19 q14 -9 28 0 V22z" fill="#13212a"/></svg>
<!-- snow -->
<svg style="left:8px;top:448px" width="32" height="32" viewBox="0 0 32 32"><g stroke="#13212a" stroke-width="3.200" stroke-linecap="round" fill="none"><g id="arm"><line x1="16" y1="2.500" x2="16" y2="29.500"/><path d="M12 4.500 L16 8.500 L20 4.500 M12 27.500 L16 23.500 L20 27.500"/></g><use href="#arm" transform="rotate(60 16 16)"/><use href="#arm" transform="rotate(120 16 16)"/></g></svg>
<!-- rain -->
<svg style="left:12px;top:510px" width="24" height="28" viewBox="0 0 24 28"><path d="M12 1.500 C12 1.500 22.500 10.500 22.500 16.500 a10.500 10.500 0 0 1 -21 0 C1.500 10.500 12 1.500 12 1.500z" fill="#13212a"/></svg>
<div class="abs" style="left:0;top:1774px;width:462px;height:76px;background:#e1e7eb"></div>


<!-- middle panel -->
<svg style="left:489px;top:117px" width="34" height="30" viewBox="0 0 34 30"><path d="M16.800 5 L29.300 26.300 H4.600 Z" fill="#13212a" stroke="#13212a" stroke-width="3" stroke-linejoin="round"/><path d="M16.800 7.300 L23.700 18.300 H21 L16.800 15.200 L13.200 18.300 H10.100 Z" fill="#f7f9f9"/></svg>
<svg style="left:1126px;top:119px" width="28" height="28" viewBox="0 0 28 28"><path d="M5 5 L23 23 M23 5 L5 23" stroke="#667789" stroke-width="4.200" stroke-linecap="round"/></svg>
<div class="abs ln" style="left:488px;top:168px;width:670px;height:2px"></div>
<div class="abs" style="left:1170px;top:170px;width:12px;height:830px;border-radius:6px;background:#b9bbba"></div>
<div class="abs ln" style="left:702px;top:194px;width:2px;height:1634px"></div>
<div class="abs" style="left:476px;top:286px;width:214px;height:98px;border-radius:9px;background:#c0ccd9"></div>
<svg style="left:596px;top:336px" width="80" height="38" viewBox="596 336 80 38"><g stroke="#667789" stroke-width="2" fill="none"><path d="M603.100 366.100 H620.800 L623.900 343 H639 L643.700 366.100"/><path d="M656 366.100 H671.700"/></g><g fill="#667789"><circle cx="603.100" cy="366.100" r="4"/><circle cx="620.800" cy="366.100" r="4"/><circle cx="623.900" cy="343" r="4"/><circle cx="639" cy="343" r="4"/><circle cx="643.700" cy="366.100" r="4"/></g><path d="M647.300 359 H655.300 V365 L651.300 368.600 L647.300 365 Z" fill="#13212a" stroke="#fff" stroke-width="1.800" stroke-linejoin="round"/></svg>
<svg style="left:710px;top:180px" width="460" height="100" viewBox="710 180 460 100"><path d="M726.4 263.6 L799.8 224.3 L934.5 224.3 L934.5 263.6 Z" fill="#fff" stroke="#c3cfdc" stroke-width="1.300"/><path d="M769.8 241.1 L934.5 241.1 M779.6 263.6 L835.0 224.3 M830.0 263.6 L867.1 224.3 M882.9 263.6 L900.5 224.3" fill="none" stroke="#c3cfdc" stroke-width="1.300"/><path d="M934.5 195.7 L960.0 218.0 L987.7 195.7 L1002.3 210.0 L1018.9 217.9 L1040.7 214.5 L1058.2 224.6 L1073.0 214.8 L1103.8 233.6 L1125.7 238.6 L1145.2 263.6 L934.5 263.6 Z" fill="#fff" stroke="#5a6d80" stroke-width="1.500" stroke-linejoin="round"/><path d="M987.7 195.7 L981.4 218.0 M960.0 218.0 L981.4 218.0 M981.4 218.0 L1002.3 210.0 M934.5 229.6 L960.0 218.0 M934.5 229.6 L968.0 242.5 M960.0 218.0 L968.0 242.5 M981.4 218.0 L968.0 242.5 M981.4 218.0 L997.5 237.5 M1002.3 210.0 L997.5 237.5 M1018.9 217.9 L997.5 237.5 M1018.9 217.9 L1027.0 244.3 M1018.9 217.9 L1046.6 236.8 M1040.7 214.5 L1046.6 236.8 M1058.2 224.6 L1046.6 236.8 M1058.2 224.6 L1076.1 242.1 M1073.0 214.8 L1076.1 242.1 M1103.8 233.6 L1076.1 242.1 M968.0 242.5 L997.5 237.5 M997.5 237.5 L1027.0 244.3 M1027.0 244.3 L1046.6 236.8 M1046.6 236.8 L1076.1 242.1 M934.5 263.6 L968.0 242.5 M968.0 242.5 L972.5 263.6 M968.0 242.5 L998.4 263.6 M997.5 237.5 L998.4 263.6 M1027.0 244.3 L998.4 263.6 M1027.0 244.3 L1024.6 263.6 M1027.0 244.3 L1059.1 263.6 M1046.6 236.8 L1059.1 263.6 M1076.1 242.1 L1059.1 263.6 M1076.1 242.1 L1094.8 263.6 M1103.8 233.6 L1094.8 263.6 M1103.8 233.6 L1117.7 263.6 M1125.7 238.6 L1117.7 263.6" fill="none" stroke="#5a6d80" stroke-width="1.500"/></svg>
<svg style="left:726px;top:350px" width="430" height="160" viewBox="726 350 430 160"><line x1="749.0" y1="364" x2="749.0" y2="501" stroke="#c3cfdc" stroke-width="2"/><line x1="816.6" y1="364" x2="816.6" y2="501" stroke="#c3cfdc" stroke-width="2"/><line x1="884.2" y1="364" x2="884.2" y2="501" stroke="#c3cfdc" stroke-width="2"/><line x1="951.8" y1="364" x2="951.8" y2="501" stroke="#c3cfdc" stroke-width="2"/><line x1="1019.4" y1="364" x2="1019.4" y2="501" stroke="#c3cfdc" stroke-width="2"/><line x1="1087.0" y1="364" x2="1087.0" y2="501" stroke="#c3cfdc" stroke-width="2"/><line x1="782.8" y1="492" x2="782.8" y2="501" stroke="#c3cfdc" stroke-width="2"/><line x1="850.4" y1="492" x2="850.4" y2="501" stroke="#c3cfdc" stroke-width="2"/><line x1="918.0" y1="492" x2="918.0" y2="501" stroke="#c3cfdc" stroke-width="2"/><line x1="985.6" y1="492" x2="985.6" y2="501" stroke="#c3cfdc" stroke-width="2"/><line x1="1053.2" y1="492" x2="1053.2" y2="501" stroke="#c3cfdc" stroke-width="2"/><line x1="749" y1="488.500" x2="1135" y2="488.500" stroke="#c3cfdc" stroke-width="2"/><path d="M749.0 488 L850.4 488 L867.3 364 L951.8 364 L980.5 488 L1135 488" fill="none" stroke="#667789" stroke-width="4" stroke-linejoin="round" stroke-linecap="round"/><circle cx="749.0" cy="488" r="7.800" fill="#f7f9f9"/><circle cx="749.0" cy="488" r="5.800" fill="#667789"/><circle cx="850.4" cy="488" r="7.800" fill="#f7f9f9"/><circle cx="850.4" cy="488" r="5.800" fill="#667789"/><circle cx="867.3" cy="364" r="7.800" fill="#f7f9f9"/><circle cx="867.3" cy="364" r="5.800" fill="#667789"/><circle cx="951.8" cy="364" r="7.800" fill="#f7f9f9"/><circle cx="951.8" cy="364" r="5.800" fill="#667789"/><circle cx="980.5" cy="488" r="7.800" fill="#f7f9f9"/><circle cx="980.5" cy="488" r="5.800" fill="#667789"/><path d="M1032.2 477.500 H1047.2 V487 L1039.7 493.500 L1032.2 487 Z" fill="#13212a" stroke="#f7f9f9" stroke-width="2" stroke-linejoin="round"/></svg>
<div class="abs" style="left:1046px;top:561px;width:95px;height:40px;border:2px solid #b7c2f4;border-radius:8px;background:#eef0fd"></div>
<div class="abs ln" style="left:726px;top:617px;width:419px;height:2px"></div>
<div class="abs" style="left:1070px;top:633px;width:71px;height:40px;border:2px solid #b9bcbd;border-radius:8px;background:#e8ebeb"></div>
<div class="abs" style="left:726px;top:690px;width:415px;height:425px;border:2px solid #bccadb;border-radius:8px"></div>
<div class="abs inp" style="top:707px"></div>
<svg style="left:746px;top:714px" width="24" height="28" viewBox="0 0 24 28"><path d="M4 4.800 H8.500 Q10.500 1.500 12 1.500 Q13.500 1.500 15.500 4.800 H20 a2.100 2.100 0 0 1 0 4.200 H4 a2.100 2.100 0 0 1 0 -4.200z M4 11.400 H20 V23.500 a3 3 0 0 1 -3 3 H7 a3 3 0 0 1 -3 -3z" fill="#667789"/></svg>
<div class="abs ln" style="left:728px;top:764px;width:415px;height:2px"></div>
<div class="abs inp" style="top:781px"></div>
<svg style="left:746px;top:788px" width="24" height="28" viewBox="0 0 24 28"><path d="M4 4.800 H8.500 Q10.500 1.500 12 1.500 Q13.500 1.500 15.500 4.800 H20 a2.100 2.100 0 0 1 0 4.200 H4 a2.100 2.100 0 0 1 0 -4.200z M4 11.400 H20 V23.500 a3 3 0 0 1 -3 3 H7 a3 3 0 0 1 -3 -3z" fill="#667789"/></svg>
<div class="abs ln" style="left:728px;top:838px;width:415px;height:2px"></div>
<div class="abs inp" style="top:855px"></div>
<svg style="left:746px;top:862px" width="24" height="28" viewBox="0 0 24 28"><path d="M4 4.800 H8.500 Q10.500 1.500 12 1.500 Q13.500 1.500 15.500 4.800 H20 a2.100 2.100 0 0 1 0 4.200 H4 a2.100 2.100 0 0 1 0 -4.200z M4 11.400 H20 V23.500 a3 3 0 0 1 -3 3 H7 a3 3 0 0 1 -3 -3z" fill="#667789"/></svg>
<div class="abs ln" style="left:728px;top:912px;width:415px;height:2px"></div>
<div class="abs inp" style="top:929px"></div>
<svg style="left:746px;top:936px" width="24" height="28" viewBox="0 0 24 28"><path d="M4 4.800 H8.500 Q10.500 1.500 12 1.500 Q13.500 1.500 15.500 4.800 H20 a2.100 2.100 0 0 1 0 4.200 H4 a2.100 2.100 0 0 1 0 -4.200z M4 11.400 H20 V23.500 a3 3 0 0 1 -3 3 H7 a3 3 0 0 1 -3 -3z" fill="#667789"/></svg>
<div class="abs ln" style="left:728px;top:986px;width:415px;height:2px"></div>
<div class="abs inp" style="top:1003px"></div>
<svg style="left:746px;top:1010px" width="24" height="28" viewBox="0 0 24 28"><path d="M4 4.800 H8.500 Q10.500 1.500 12 1.500 Q13.500 1.500 15.500 4.800 H20 a2.100 2.100 0 0 1 0 4.200 H4 a2.100 2.100 0 0 1 0 -4.200z M4 11.400 H20 V23.500 a3 3 0 0 1 -3 3 H7 a3 3 0 0 1 -3 -3z" fill="#667789"/></svg>
<div class="abs ln" style="left:728px;top:1060px;width:415px;height:2px"></div>
<svg style="left:746px;top:1077px" width="24" height="24" viewBox="0 0 24 24"><path d="M12 3 V21 M3 12 H21" stroke="#667789" stroke-width="3.400" stroke-linecap="round"/></svg>
<div class="abs ln" style="left:726px;top:1141px;width:432px;height:2px"></div>
<div class="abs" style="left:726px;top:1167px;width:432px;height:216px;border-radius:10px;background:#eef1fc"></div>
<div class="abs" style="left:1001px;top:1223px;width:55px;height:28px;border:1.500px solid #cfd3d6;border-radius:5px;background:#f8f9f9;box-shadow:0 2px 0 #c9cdd0"></div>
<div class="abs" style="left:750px;top:1311px;width:135px;height:48px;border-radius:8px;background:#667789"></div>
<div class="abs" style="left:726px;top:1407px;width:432px;height:349px;border-radius:10px;background:#e2e7eb"></div>
<div class="abs ln" style="left:750px;top:1612px;width:384px;height:2px"></div>
<svg style="left:734px;top:1794px" width="20" height="16" viewBox="0 0 20 16"><path d="M10 3 L17.500 14 H2.500 Z" fill="#667789" stroke="#667789" stroke-width="1" stroke-linejoin="round"/></svg>
<div class="abs" style="left:990px;top:1780px;width:84px;height:48px;border-radius:24px;background:#667789"></div>
<svg style="left:1015px;top:1785px" width="40" height="40" viewBox="1015 1785 40 40"><path d="M1024.3 1791.2 L1043.9 1805.2 L1036.4 1807.1 L1040.3 1815.7 L1037.0 1817.6 L1032.5 1809.6 L1026.3 1816.2 L1024.3 1815.7 Z" fill="#fbfbfc" stroke="#fbfbfc" stroke-width="1.500" stroke-linejoin="round"/></svg>
<svg style="left:1095px;top:1788px" width="42" height="32" viewBox="1095 1788 42 32"><g fill="none" stroke="#667789" stroke-width="3.400" stroke-linecap="round" stroke-linejoin="round"><path d="M1108.500 1796 L1101.600 1804 L1108.500 1812"/><path d="M1123.300 1796 L1130.200 1804 L1123.300 1812"/></g><path d="M1117 1794.500 L1113.600 1813.500" stroke="#667789" stroke-width="3.400" fill="none"/></svg>

<!-- map controls -->
<div class="abs ctl" style="left:3340px;top:122px;width:60px;height:60px"></div>
<svg style="left:3350px;top:132px" width="40" height="40" viewBox="3350 132 40 40"><circle cx="3366.300" cy="148.500" r="8.600" fill="none" stroke="#1b2a41" stroke-width="3.800"/><path d="M3372.800 155 L3382 164.200" stroke="#1b2a41" stroke-width="4.200" stroke-linecap="round"/></svg>
<div class="abs ctl" style="left:3342px;top:206px;width:58px;height:174px"></div>
<div class="abs" style="left:3342px;top:264px;width:58px;height:2px;background:#ddd"></div><div class="abs" style="left:3342px;top:322px;width:58px;height:2px;background:#ddd"></div>
<svg style="left:3356px;top:220px" width="30" height="30" viewBox="0 0 30 30"><path d="M15 7.500 V22.500 M7.500 15 H22.500" stroke="#333" stroke-width="3.800" stroke-linecap="round"/></svg>
<svg style="left:3356px;top:279px" width="30" height="30" viewBox="0 0 30 30"><path d="M7.500 15 H22.500" stroke="#333" stroke-width="3.800" stroke-linecap="round"/></svg>
<svg style="left:3361px;top:340px" width="20" height="30" viewBox="0 0 20 30"><path d="M10 4 L15 14 H5 Z" fill="#333"/><path d="M10 25.500 L15 15.500 H5 Z" fill="#c4c4c4"/></svg>

<span class="tb" style="left:138.7px;top:44.7px;font-size:24px;letter-spacing:-0.213px;color:#fff;">Styles</span>
<span class="tb" style="left:256.6px;top:44.7px;font-size:24px;letter-spacing:1.334px;color:#fff;">Untitled</span>
<span class="tb" style="left:2336.0px;top:44.7px;font-size:24px;letter-spacing:1.151px;color:#fff;">Help</span>
<span class="tb" style="left:2438.6px;top:44.7px;font-size:24px;letter-spacing:0.357px;color:#fff;">Fonts</span>
<span class="tb" style="left:2553.0px;top:44.7px;font-size:24px;letter-spacing:0.647px;color:#fff;">Images</span>
<span class="tb" style="left:2686.5px;top:44.7px;font-size:24px;letter-spacing:0.743px;color:#fff;">History</span>
<span class="tb" style="left:2822.7px;top:44.7px;font-size:24px;letter-spacing:0.239px;color:#fff;">Settings</span>
<span class="tb" style="left:2966.6px;top:44.7px;font-size:24px;letter-spacing:1.306px;color:#fff;">Print</span>
<span class="tb" style="left:3124.7px;top:44.7px;font-size:24px;letter-spacing:0.411px;color:#fff;">Share</span>
<span class="tb" style="left:3266.4px;top:44.7px;font-size:24px;letter-spacing:0.355px;color:#fff;">Publish...</span>
<span class="t" style="left:411.0px;top:46.1px;font-size:20px;letter-spacing:0.401px;color:#fff;">Edited less than a minute ago</span>
<span class="tb" style="left:5.8px;top:117.6px;font-size:28px;letter-spacing:-1.163px;color:#5f7285;">Layers</span>
<span class="tb" style="left:114.5px;top:117.6px;font-size:28px;letter-spacing:0.092px;color:#34495c;">Global</span>
<span class="t" style="left:53.6px;top:212.7px;font-size:24px;letter-spacing:0.825px;color:#13212a;">Projection</span>
<span class="t" style="left:54.6px;top:272.7px;font-size:24px;letter-spacing:0.503px;color:#13212a;">3D Lighting</span>
<span class="t" style="left:54.6px;top:332.7px;font-size:24px;letter-spacing:0.549px;color:#13212a;">3D Terrain</span>
<span class="t" style="left:54.6px;top:392.7px;font-size:24px;letter-spacing:0.839px;color:#13212a;">Atmosphere</span>
<span class="t" style="left:53.6px;top:452.7px;font-size:24px;letter-spacing:-0.001px;color:#13212a;">Snow</span>
<span class="t" style="left:53.6px;top:512.7px;font-size:24px;letter-spacing:0.129px;color:#13212a;">Rain</span>
<span class="m" style="left:5.8px;top:1803.5px;font-size:19.5px;letter-spacing:0.360px;font-weight:bold;color:#13212a;">17.14</span>
<span class="m" style="left:269.8px;top:1803.5px;font-size:19.5px;letter-spacing:0.275px;color:#13212a;">43.451,−79.672</span>
<span class="tb" style="left:536.5px;top:121.0px;font-size:26px;letter-spacing:0.556px;color:#13212a;">3D Terrain</span>
<span class="tb" style="left:487.0px;top:211.4px;font-size:20px;letter-spacing:0.741px;color:#13212a;">Enable terrain</span>
<span class="m" style="left:487.0px;top:247.3px;font-size:20px;letter-spacing:0.339px;color:#13212a;">enable</span>
<span class="tb" style="left:487.0px;top:303.0px;font-size:20px;letter-spacing:0.438px;color:#13212a;">Exaggeration</span>
<span class="m" style="left:487.0px;top:341.8px;font-size:20px;color:#13212a;">0</span>
<span class="tb" style="left:726.0px;top:320.1px;font-size:20px;letter-spacing:0.587px;color:#13212a;">Terrain exaggeration</span>
<span class="t" style="left:945.0px;top:320.1px;font-size:20px;letter-spacing:0.477px;color:#13212a;">Zoom range</span>
<span class="m" style="left:741.8px;top:520.3px;font-size:17.9px;letter-spacing:-0.600px;color:#b4c2d1;">0</span>
<span class="m" style="left:811.4px;top:520.3px;font-size:17.9px;letter-spacing:-1.600px;color:#b4c2d1;">4</span>
<span class="m" style="left:877.8px;top:520.3px;font-size:17.9px;letter-spacing:-0.600px;color:#b4c2d1;">8</span>
<span class="m" style="left:939.4px;top:520.3px;font-size:17.9px;letter-spacing:0.429px;color:#b4c2d1;">12</span>
<span class="m" style="left:1076.2px;top:520.3px;font-size:17.9px;letter-spacing:-0.571px;color:#b4c2d1;">20</span>
<span class="m" style="left:1005.4px;top:520.3px;font-size:17.9px;color:#b4c2d1;">1</span>
<span class="m" style="left:1014.7px;top:519.2px;font-size:19.2px;letter-spacing:0.881px;color:#13212a;background:#f7f9f9">17.1</span>
<span class="t" style="left:725.5px;top:573.1px;font-size:20px;letter-spacing:0.205px;color:#13212a;">Rate of change</span>
<span class="m" style="left:1058.6px;top:573.1px;font-size:20px;letter-spacing:0.219px;color:#13212a;">Linear</span>
<span class="t" style="left:725.5px;top:645.6px;font-size:20px;letter-spacing:0.648px;color:#13212a;">Data field</span>
<span class="m" style="left:1083.7px;top:645.6px;font-size:20px;letter-spacing:0.026px;color:#13212a;">Zoom</span>
<span class="m" style="left:888.6px;top:718.1px;font-size:20px;letter-spacing:-0.560px;color:#13212a;">0</span>
<span class="m" style="left:912.2px;top:718.1px;font-size:20px;color:#5f7285;">z</span>
<span class="m" style="left:1113.5px;top:723.6px;font-size:20px;color:#13212a;">0</span>
<span class="m" style="left:888.6px;top:792.1px;font-size:20px;letter-spacing:-0.560px;color:#13212a;">6</span>
<span class="m" style="left:912.2px;top:792.1px;font-size:20px;color:#5f7285;">z</span>
<span class="m" style="left:1113.5px;top:797.6px;font-size:20px;color:#13212a;">0</span>
<span class="m" style="left:888.6px;top:866.1px;font-size:20px;letter-spacing:-0.560px;color:#13212a;">7</span>
<span class="m" style="left:912.2px;top:866.1px;font-size:20px;color:#5f7285;">z</span>
<span class="m" style="left:1113.5px;top:871.6px;font-size:20px;color:#13212a;">1</span>
<span class="m" style="left:875.5px;top:940.1px;font-size:20px;letter-spacing:0.439px;color:#13212a;">12</span>
<span class="m" style="left:912.2px;top:940.1px;font-size:20px;color:#5f7285;">z</span>
<span class="m" style="left:1113.5px;top:945.6px;font-size:20px;color:#13212a;">1</span>
<span class="m" style="left:851.4px;top:1014.1px;font-size:20px;letter-spacing:0.146px;color:#13212a;">13.7</span>
<span class="m" style="left:912.2px;top:1014.1px;font-size:20px;color:#5f7285;">z</span>
<span class="m" style="left:1113.5px;top:1019.6px;font-size:20px;color:#13212a;">0</span>
<span class="tb" style="left:782.0px;top:1078.6px;font-size:20px;letter-spacing:0.485px;color:#5f7285;">Add another stop</span>
<span class="t" style="left:749.6px;top:1195.6px;font-size:20px;letter-spacing:0.519px;color:#3a4c5b;">Pitch the map to better view 3D features.</span>
<span class="t" style="left:750.6px;top:1227.8px;font-size:20px;letter-spacing:0.477px;color:#3a4c5b;">To freely adjust pitch, hold</span>
<span class="m" style="left:1007.9px;top:1230.0px;font-size:17.4px;letter-spacing:0.863px;color:#3a4c5b;">Ctrl</span>
<span class="t" style="left:1065.4px;top:1227.8px;font-size:20px;letter-spacing:0.559px;color:#3a4c5b;">&amp; drag</span>
<span class="t" style="left:750.6px;top:1261.9px;font-size:20px;letter-spacing:0.762px;color:#3a4c5b;">the map.</span>
<span class="tb" style="left:773.6px;top:1324.7px;font-size:20px;letter-spacing:0.363px;color:#fff;">Pitch 75°</span>
<span class="tb" style="left:749.8px;top:1435.7px;font-size:20px;letter-spacing:0.582px;color:#13212a;">Property ID:</span>
<span class="m" style="left:875.4px;top:1437.5px;font-size:17.8px;letter-spacing:0.149px;color:#13212a;">exaggeration</span>
<span class="tb" style="left:749.8px;top:1467.1px;font-size:20px;letter-spacing:0.531px;color:#13212a;">Property Type:</span>
<span class="m" style="left:901.0px;top:1468.9px;font-size:17.8px;letter-spacing:0.195px;color:#13212a;">terrain</span>
<span class="t" style="left:749.8px;top:1503.1px;font-size:20px;letter-spacing:0.436px;color:#13212a;">Exaggerates the elevation of the terrain</span>
<span class="t" style="left:749.8px;top:1533.6px;font-size:20px;letter-spacing:0.587px;color:#13212a;">by multiplying the data from the DEM</span>
<span class="t" style="left:751.8px;top:1563.1px;font-size:20px;letter-spacing:0.479px;color:#13212a;">with this value.</span>
<span class="tb" style="left:749.8px;top:1643.1px;font-size:20px;letter-spacing:-0.426px;color:#13212a;">Mapbox GL JS:</span>
<span class="m" style="left:894.3px;top:1644.9px;font-size:17.8px;letter-spacing:0.335px;color:#13212a;">2.0.0+</span>
<span class="tb" style="left:749.8px;top:1674.5px;font-size:20px;letter-spacing:-0.008px;color:#13212a;">Maps SDK for iOS:</span>
<span class="m" style="left:930.5px;top:1676.3px;font-size:17.8px;letter-spacing:0.345px;color:#13212a;">10.0.0+</span>
<span class="tb" style="left:749.8px;top:1705.1px;font-size:20px;letter-spacing:0.193px;color:#13212a;">Maps SDK for Android:</span>
<span class="m" style="left:976.8px;top:1706.9px;font-size:17.8px;letter-spacing:0.395px;color:#13212a;">10.0.0+</span>
<span class="t" style="left:761.6px;top:1793.7px;font-size:20px;letter-spacing:0.550px;color:#6b7d8e;">Property details</span>

<div class="abs" style="left:0;top:1812px;width:3424px;height:38px;background:linear-gradient(180deg,rgba(0,0,0,0),rgba(0,0,0,.09))"></div>
<div id="corner-v" class="abs" style="left:3411px;top:1837px;width:13px;height:13px;background:radial-gradient(circle at 0 0,rgba(0,0,0,0) 11px,#0b100c 12.500px)"></div>
</body>
</html>
